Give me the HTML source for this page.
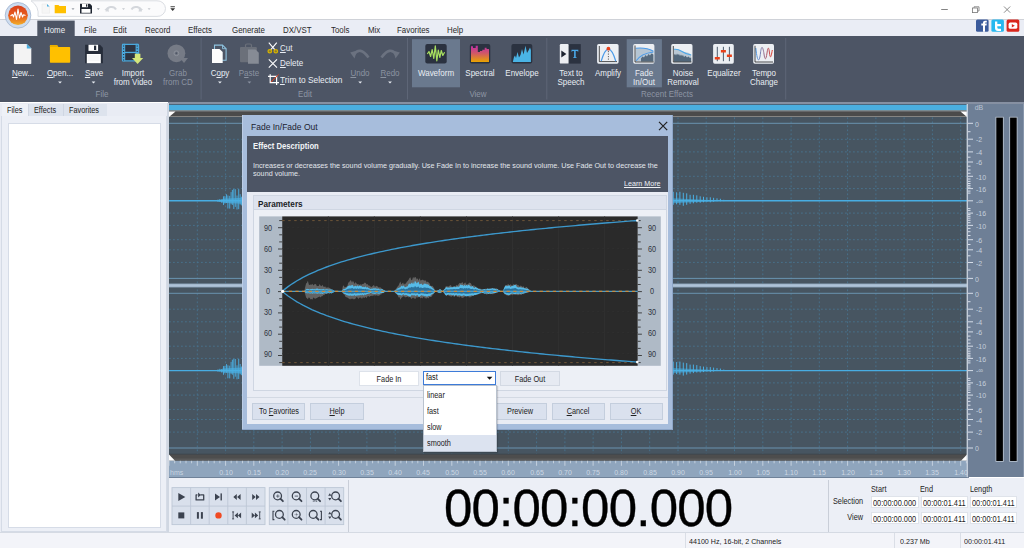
<!DOCTYPE html><html><head><meta charset="utf-8"><style>
*{margin:0;padding:0;box-sizing:border-box}
html,body{width:1024px;height:548px;overflow:hidden;background:#fff;font-family:"Liberation Sans", sans-serif;position:relative}
.a{position:absolute}
.t{position:absolute;white-space:nowrap;line-height:1}
</style></head><body>
<div class="a" style="left:0px;top:0px;width:1024px;height:19px;background:#fff"></div><div class="a" style="left:0px;top:19px;width:1024px;height:1px;background:#cfd2d8"></div><div class="a" style="left:0px;top:20px;width:1024px;height:16px;background:#eaedf5"></div><div class="a" style="left:0px;top:36px;width:1024px;height:66px;background:#4d5565"></div><div class="a" style="left:0px;top:102.5px;width:168px;height:430px;background:#e9ecf4"></div><div class="a" style="left:168px;top:104px;width:801px;height:374px;background:#7e8ea4"></div><div class="a" style="left:169px;top:104.5px;width:798px;height:356px;background:#475561"></div><div class="a" style="left:968px;top:104px;width:56px;height:373px;background:#6e7f96;border-right:1.5px solid #8796ab"></div><div class="a" style="left:168px;top:478px;width:856px;height:54px;background:#ebeef5"></div><div class="a" style="left:0px;top:532px;width:1024px;height:16px;background:#f3f4f9"></div><svg class="a" style="left:0;top:0" width="1024" height="548" viewBox="0 0 1024 548"><defs>
<linearGradient id="appg" x1="0" y1="0" x2="0" y2="1"><stop offset="0" stop-color="#d8401c"/><stop offset="0.55" stop-color="#e8601e"/><stop offset="1" stop-color="#f2b02a"/></linearGradient>
<linearGradient id="specg" x1="0" y1="0" x2="0" y2="1"><stop offset="0" stop-color="#c02fa8"/><stop offset="0.45" stop-color="#d0566a"/><stop offset="1" stop-color="#e8a400"/></linearGradient>
<linearGradient id="tempog" x1="0" y1="0" x2="1" y2="0"><stop offset="0" stop-color="#4a9ae8"/><stop offset="1" stop-color="#e03a2a"/></linearGradient>
</defs><path d="M31 0.8 H157 A8 8 0 0 1 165.5 8.6 A8 8 0 0 1 157 16.4 H38 A16 16 0 0 0 31 0.8 Z" fill="#fbfbfc" stroke="#d6d9df" stroke-width="0.9"/><path d="M42 4 H47 L49.5 6.5 V13.2 H42 Z" fill="#f6f6f6" stroke="#e4e4e4" stroke-width="0.4"/><path d="M47 4 L49.5 6.5 H47 Z" fill="#4aaee0"/><path d="M54.7 5 H58.5 L59.5 6 H66 V13.3 H54.7 Z" fill="#ffc000"/><path d="M71.5 8.2 h3 l-1.5 1.8 z" fill="#9aa0a8"/><path d="M80 3.8 H90 L92 5.8 V13.6 H80 Z" fill="#1e2530"/><rect x="82" y="3.8" width="6" height="3.4" fill="#fff"/><rect x="86" y="4.3" width="1.3" height="2.4" fill="#1e2530"/><rect x="81.5" y="9" width="9" height="3.8" fill="#fff"/><path d="M96.8 8.2 h3 l-1.5 1.8 z" fill="#9aa0a8"/><path d="M106.5 11.5 A5 4.5 0 0 1 116 9.5" fill="none" stroke="#d4d7dc" stroke-width="2"/><path d="M104.5 9.5 L108.5 7 L108.8 12 Z" fill="#d4d7dc"/><path d="M122 8.2 h3 l-1.5 1.8 z" fill="#c4c8ce"/><path d="M141 11.5 A5 4.5 0 0 0 131.5 9.5" fill="none" stroke="#d4d7dc" stroke-width="2"/><path d="M143 9.5 L139 7 L138.7 12 Z" fill="#d4d7dc"/><path d="M147.6 8.2 h3 l-1.5 1.8 z" fill="#c4c8ce"/><rect x="170.5" y="6.3" width="4.4" height="0.9" fill="#333"/><path d="M170.3 8.3 h4.8 l-2.4 2.6 z" fill="#333"/><circle cx="18" cy="15.3" r="12.8" fill="#cddcf0" stroke="#98acc8" stroke-width="0.7"/><circle cx="18" cy="15.3" r="9.8" fill="url(#appg)"/><path d="M10.5 16 L12.5 14.5 L13.5 17 L15 12 L16.5 19.5 L18 9 L19.5 18 L21 12.5 L22.5 17 L23.5 14.8 L25.5 15.5" fill="none" stroke="#fff" stroke-width="1.1" stroke-linejoin="round"/><rect x="941.2" y="9" width="6.6" height="0.9" fill="#777"/><rect x="972.5" y="8" width="5" height="4.6" fill="none" stroke="#777" stroke-width="0.8"/><path d="M974 7.8 V6.8 H979 V11 H977.8" fill="none" stroke="#777" stroke-width="0.8"/><path d="M1004 6.5 L1010.2 12.7 M1010.2 6.5 L1004 12.7" stroke="#777" stroke-width="0.85"/><rect x="976" y="19.4" width="12.6" height="12.4" rx="1.5" fill="#3b5b9c"/><path d="M983 31.8 V25.5 H981.3 V23.6 H983 V22.4 Q983 20.7 985 20.7 H986.8 V22.6 H985.6 Q985 22.6 985 23.2 V23.6 H986.8 L986.5 25.5 H985 V31.8 Z" fill="#fff"/><rect x="991.4" y="19.4" width="12.5" height="12.4" rx="1.5" fill="#27b8ef"/><path d="M995 21.5 H997.3 V24 H1001 V26.2 H997.3 V27.5 Q997.3 28.8 998.6 28.8 H1001 V31 H998 Q995 31 995 28 Z" fill="#fff"/><rect x="1006.6" y="19.4" width="12.7" height="12.4" rx="1.5" fill="#d9261c"/><rect x="1008.6" y="22.6" width="8.7" height="6.2" rx="1.6" fill="#fff"/><path d="M1011.8 23.9 L1014.8 25.7 L1011.8 27.5 Z" fill="#d9261c"/><rect x="37.3" y="20.6" width="37.4" height="16" fill="#4d5565"/><rect x="200.6" y="38" width="1" height="61.5" fill="#5e6677"/><rect x="407.0" y="38" width="1" height="61.5" fill="#5e6677"/><rect x="546.3" y="38" width="1" height="61.5" fill="#5e6677"/><rect x="785.2" y="38" width="1" height="61.5" fill="#5e6677"/><rect x="412" y="39.2" width="48" height="48.1" fill="#6a798e"/><rect x="626.7" y="39.2" width="35.2" height="48.1" fill="#6a798e"/><path d="M14.6 43.9 H26.8 L31.3 48.6 V63.2 Q31.3 64 30.5 64 H14.6 Q13.9 64 13.9 63.2 V44.7 Q13.9 43.9 14.6 43.9 Z" fill="#f3f3f3"/><path d="M26.8 43.9 L31.3 48.6 H26.8 Z" fill="#4aaee0"/><path d="M50.6 45 H57 L58.3 47 H69.4 Q70.2 47 70.2 47.8 V62 Q70.2 62.7 69.4 62.7 H50.6 Q49.9 62.7 49.9 62 V45.8 Q49.9 45 50.6 45 Z" fill="#ffc000"/><path d="M49.9 47 H58.3 L57 45 H50.6 Q49.9 45 49.9 45.8Z" fill="#e8ae00"/><path d="M85.1 44.8 H100 L102.9 47.7 V63.2 H85.1 Z" fill="#262d3a"/><rect x="88.5" y="44.8" width="9.6" height="6.1" fill="#fff"/><rect x="94" y="45.6" width="2.2" height="4.4" fill="#262d3a"/><rect x="86.8" y="54" width="14" height="9.2" fill="#fff"/><path d="M88 56 H99.5 M88 58 H99.5 M88 60 H99.5" stroke="#dde0e6" stroke-width="0.5"/><rect x="122.5" y="44.3" width="16" height="16.6" rx="1" fill="#2d3442" stroke="#4aa8dc" stroke-width="1.3"/><rect x="122" y="43.8" width="3.2" height="17.4" fill="#4aa8dc"/><rect x="135.6" y="43.8" width="3.2" height="17.4" fill="#4aa8dc"/><rect x="122" y="51.8" width="16.8" height="1.3" fill="#4aa8dc"/><rect x="123" y="45.5" width="1.2" height="1" fill="#2d3442"/><rect x="136.6" y="45.5" width="1.2" height="1" fill="#2d3442"/><rect x="123" y="48.3" width="1.2" height="1" fill="#2d3442"/><rect x="136.6" y="48.3" width="1.2" height="1" fill="#2d3442"/><rect x="123" y="51" width="1.2" height="1" fill="#2d3442"/><rect x="136.6" y="51" width="1.2" height="1" fill="#2d3442"/><rect x="123" y="54" width="1.2" height="1" fill="#2d3442"/><rect x="136.6" y="54" width="1.2" height="1" fill="#2d3442"/><rect x="123" y="56.8" width="1.2" height="1" fill="#2d3442"/><rect x="136.6" y="56.8" width="1.2" height="1" fill="#2d3442"/><rect x="123" y="59.5" width="1.2" height="1" fill="#2d3442"/><rect x="136.6" y="59.5" width="1.2" height="1" fill="#2d3442"/><path d="M134.8 53.7 H140.4 V58 H143.2 L137.6 63.9 L132 58 H134.8 Z" fill="#d4e67a"/><circle cx="176.4" cy="53.3" r="8.9" fill="#767b86"/><circle cx="176.4" cy="53.3" r="2.4" fill="none" stroke="#8b909a" stroke-width="1"/><circle cx="176.4" cy="53.3" r="1" fill="#4d5565"/><path d="M180 58 H188 L184 63 Z" fill="#767b86"/><path d="M214.5 45.1 H222.5 L226.1 48.7 V60.3 H214.5 Z" fill="none" stroke="#8fc4e0" stroke-width="1.1"/><path d="M222.5 45.1 V48.7 H226.1" fill="none" stroke="#8fc4e0" stroke-width="0.9"/><path d="M212 48.9 H219.5 L222.7 52 V63.1 H212 Z" fill="#fdfdfd"/><rect x="240" y="47" width="16.9" height="15.3" rx="1" fill="#6b707a"/><rect x="245.5" y="44" width="6" height="4" rx="1.5" fill="none" stroke="#6b707a" stroke-width="1.2"/><path d="M248 49.6 H255.5 L258.8 52.8 V63.8 H248 Z" fill="#868b95"/><path d="M268.8 42.6 L275.2 50.2 M276.8 42.6 L270.4 50.2" stroke="#fff" stroke-width="1.1"/><ellipse cx="269.8" cy="51.2" rx="1.8" ry="1.6" fill="#8a7a30" stroke="#d6b300" stroke-width="1.2"/><ellipse cx="275.8" cy="51.2" rx="1.8" ry="1.6" fill="#8a7a30" stroke="#d6b300" stroke-width="1.2"/><path d="M268.8 59.3 L277 67.6 M277 59.3 L268.8 67.6" stroke="#fff" stroke-width="1.1"/><path d="M270.2 74.2 V82.6 H279 M268 76.4 H276.6 V85" fill="none" stroke="#fff" stroke-width="1.2"/><path d="M271 82 L278.6 74.6" stroke="#e8401a" stroke-width="1"/><path d="M353.5 55 Q360 45.5 368.5 57.5" fill="none" stroke="#6b7280" stroke-width="2.6"/><path d="M350.2 52.5 L357 50.5 L354.5 58.5 Z" fill="#6b7280"/><path d="M396.5 55 Q390 45.5 381.5 57.5" fill="none" stroke="#6b7280" stroke-width="2.6"/><path d="M399.8 52.5 L393 50.5 L395.5 58.5 Z" fill="#6b7280"/><rect x="425.3" y="44.1" width="21.4" height="19.4" rx="2" fill="#2b3240"/><path d="M427.3 54 L429 51.5 L430.6 56.5 L432.2 49.5 L433.8 58.5 L435.3 45.8 L436.8 60.8 L438.3 50 L439.8 57.5 L441.3 50.5 L442.8 55.5 L444.6 52.3" fill="none" stroke="#a8e060" stroke-width="1.2" stroke-linejoin="round"/><rect x="469.8" y="44.1" width="20.5" height="19.4" rx="2" fill="#2b3240"/><path d="M471 62 V46.3 H473 V48 H475.7 V45.8 H477.8 V52 H480 V51 H482.3 V49.8 H484.7 V47.8 H486.6 V49 H489 V62 Z" fill="url(#specg)"/><rect x="511.4" y="44.1" width="20.9" height="19.4" rx="2" fill="#2b3240"/><path d="M512.8 62 L514 57 L515 55.5 L516 58 L517.5 52 L519 57.5 L520.5 55 L522 49 L523.5 54.5 L525.5 45.8 L527 53 L528.5 50.5 L530 47.5 L530.9 50 V62 Z" fill="#4ab4e6"/><rect x="559.8" y="44.1" width="9" height="19.5" rx="1.2" fill="#eceef2"/><rect x="568.7" y="44.1" width="12.1" height="19.5" fill="#2b3240"/><path d="M561.3 50.6 L566.4 54 L561.3 57.4 Z" fill="#1c2230"/><path d="M571.5 49.8 H578.3 V51.8 H577.6 V51 H575.7 V57.3 H576.6 V58 H573.2 V57.3 H574.1 V51 H572.2 V51.8 H571.5 Z" fill="#4aa8e8"/><rect x="597.1" y="44.1" width="21.5" height="19.6" rx="1.6" fill="#eceff3"/><rect x="633.2" y="44.1" width="21.2" height="19.6" rx="1.6" fill="#eceff3"/><rect x="671.2" y="44.1" width="21.3" height="19.6" rx="1.6" fill="#eceff3"/><rect x="713.1" y="44.1" width="20.7" height="19.6" rx="1.6" fill="#eceff3"/><rect x="753.2" y="44.1" width="20.8" height="19.6" rx="1.6" fill="#eceff3"/><path d="M599.3 46 V61.6 H617" fill="none" stroke="#222" stroke-width="0.8"/><path d="M601.2 61.2 Q608.4 37 615.8 61.2" fill="none" stroke="#4a9ae8" stroke-width="1.2"/><path d="M608.4 51 V61" stroke="#222" stroke-width="0.7" stroke-dasharray="1.2 1.3"/><circle cx="608.4" cy="48.7" r="1.9" fill="#e8401a"/><path d="M635.6 48.3 Q646 47.2 653.4 51.3 V61.5 H635.6 Z" fill="#b5c5d3"/><path d="M641 61.5 V58.5 L642.5 56.5 L644 57.5 L645.5 55 L647 56.5 L648.5 54 L650 55.5 L651.5 53.5 L653.4 54.5 V61.5 Z" fill="#566a7d"/><path d="M635.8 48.3 Q646 47.2 653.4 51.3" fill="none" stroke="#4a9ae8" stroke-width="1.1"/><path d="M636.2 60.8 Q641 53.5 653.4 52" fill="none" stroke="#4a9ae8" stroke-width="1.1"/><path d="M635 45.5 V62 H653.8" fill="none" stroke="#222" stroke-width="0.8"/><path d="M674 49.3 L678 49.5 L682 51.5 L686 52.2 L689 53 L691.2 55 V61.8 H674 Z" fill="#b9c7d3"/><path d="M674 61.8 V55 L675 53.8 L676 55.5 L677 53.5 L678 55 L679 54 L680 56 L681 54.5 L682 56 L683 55 L684 57 L685.5 55.8 L687 57.5 L688.5 56.5 L690 58 L691.2 57.5 V61.8 Z" fill="#51667a"/><path d="M674 49.3 Q678 48.8 682 51.5 T691.2 55" fill="none" stroke="#4aa6e8" stroke-width="1.1"/><path d="M673.3 46 V62 H691.5" fill="none" stroke="#222" stroke-width="0.8"/><path d="M717.3 46.8 V61.2 M723.4 46.8 V61.2 M729.4 46.8 V61.2" stroke="#3a4a5c" stroke-width="0.9"/><rect x="714.8" y="57" width="5" height="2.5" fill="#e8401a"/><rect x="720.9" y="50" width="5" height="2.5" fill="#e8401a"/><rect x="726.9" y="54.5" width="5" height="2.5" fill="#e8401a"/><path d="M755.8 48 C757.5 64 759.5 62 760.5 53 S763 47 764 54 S766 60 767 53 S768.8 47 769.5 53 S771 58 772.3 50" fill="none" stroke="url(#tempog)" stroke-width="1"/><path d="M755 45.8 V62 H773" fill="none" stroke="#222" stroke-width="0.8"/><path d="M58.1 81.4 h3.8 l-1.9 2.1 z" fill="#e8ecf2"/><path d="M91.6 81.4 h3.8 l-1.9 2.1 z" fill="#e8ecf2"/><path d="M218.0 81.4 h3.8 l-1.9 2.1 z" fill="#e8ecf2"/><path d="M247.5 81.4 h3.8 l-1.9 2.1 z" fill="#8b93a1"/><path d="M358.3 81.4 h3.8 l-1.9 2.1 z" fill="#e8ecf2"/><path d="M388.1 81.4 h3.8 l-1.9 2.1 z" fill="#e8ecf2"/></svg><div class="t" style="left:44.3px;top:25.74px;font-size:8.85px;color:#eef1f6;transform:scaleX(0.8929);transform-origin:left center;">Home</div><div class="t" style="left:83.5px;top:25.74px;font-size:8.85px;color:#2a2a2a;transform:scaleX(0.8929);transform-origin:left center;">File</div><div class="t" style="left:113.2px;top:25.74px;font-size:8.85px;color:#2a2a2a;transform:scaleX(0.8929);transform-origin:left center;">Edit</div><div class="t" style="left:145.4px;top:25.74px;font-size:8.85px;color:#2a2a2a;transform:scaleX(0.8929);transform-origin:left center;">Record</div><div class="t" style="left:188.3px;top:25.74px;font-size:8.85px;color:#2a2a2a;transform:scaleX(0.8929);transform-origin:left center;">Effects</div><div class="t" style="left:231.7px;top:25.74px;font-size:8.85px;color:#2a2a2a;transform:scaleX(0.8929);transform-origin:left center;">Generate</div><div class="t" style="left:283.2px;top:25.74px;font-size:8.85px;color:#2a2a2a;transform:scaleX(0.8929);transform-origin:left center;">DX/VST</div><div class="t" style="left:330.7px;top:25.74px;font-size:8.85px;color:#2a2a2a;transform:scaleX(0.8929);transform-origin:left center;">Tools</div><div class="t" style="left:367.5px;top:25.74px;font-size:8.85px;color:#2a2a2a;transform:scaleX(0.8929);transform-origin:left center;">Mix</div><div class="t" style="left:396.8px;top:25.74px;font-size:8.85px;color:#2a2a2a;transform:scaleX(0.8929);transform-origin:left center;">Favorites</div><div class="t" style="left:447.2px;top:25.74px;font-size:8.85px;color:#2a2a2a;transform:scaleX(0.8929);transform-origin:left center;">Help</div><div class="t" style="left:-57.30px;width:160px;text-align:center;top:69.08px;font-size:8.96px;color:#e9edf3;transform:scaleX(0.8929);transform-origin:center center;"><u>N</u>ew...</div><div class="t" style="left:-20.00px;width:160px;text-align:center;top:69.08px;font-size:8.96px;color:#e9edf3;transform:scaleX(0.8929);transform-origin:center center;"><u>O</u>pen...</div><div class="t" style="left:13.50px;width:160px;text-align:center;top:69.08px;font-size:8.96px;color:#e9edf3;transform:scaleX(0.8929);transform-origin:center center;"><u>S</u>ave</div><div class="t" style="left:52.80px;width:160px;text-align:center;top:68.98px;font-size:8.96px;color:#e9edf3;transform:scaleX(0.8929);transform-origin:center center;">Import</div><div class="t" style="left:52.80px;width:160px;text-align:center;top:78.08px;font-size:8.96px;color:#e9edf3;transform:scaleX(0.8929);transform-origin:center center;">from Video</div><div class="t" style="left:97.50px;width:160px;text-align:center;top:68.98px;font-size:8.96px;color:#8b93a1;transform:scaleX(0.8929);transform-origin:center center;">Grab</div><div class="t" style="left:97.50px;width:160px;text-align:center;top:78.08px;font-size:8.96px;color:#8b93a1;transform:scaleX(0.8929);transform-origin:center center;">from CD</div><div class="t" style="left:21.50px;width:160px;text-align:center;top:89.58px;font-size:8.96px;color:#8e96a4;transform:scaleX(0.8929);transform-origin:center center;">File</div><div class="t" style="left:139.90px;width:160px;text-align:center;top:68.88px;font-size:8.96px;color:#e9edf3;transform:scaleX(0.8929);transform-origin:center center;">C<u>o</u>py</div><div class="t" style="left:169.40px;width:160px;text-align:center;top:68.88px;font-size:8.96px;color:#8b93a1;transform:scaleX(0.8929);transform-origin:center center;">P<u>a</u>ste</div><div class="t" style="left:280.1px;top:43.68px;font-size:8.96px;color:#e9edf3;transform:scaleX(0.8929);transform-origin:left center;"><u>C</u>ut</div><div class="t" style="left:280.1px;top:59.48px;font-size:8.96px;color:#e9edf3;transform:scaleX(0.8929);transform-origin:left center;"><u>D</u>elete</div><div class="t" style="left:280.1px;top:75.59px;font-size:9.35px;color:#e9edf3;transform:scaleX(0.8929);transform-origin:left center;"><u>T</u>rim to Selection</div><div class="t" style="left:280.20px;width:160px;text-align:center;top:68.88px;font-size:8.96px;color:#8b93a1;transform:scaleX(0.8929);transform-origin:center center;"><u>U</u>ndo</div><div class="t" style="left:310.00px;width:160px;text-align:center;top:68.88px;font-size:8.96px;color:#8b93a1;transform:scaleX(0.8929);transform-origin:center center;"><u>R</u>edo</div><div class="t" style="left:225.00px;width:160px;text-align:center;top:89.58px;font-size:8.96px;color:#8e96a4;transform:scaleX(0.8929);transform-origin:center center;">Edit</div><div class="t" style="left:356.00px;width:160px;text-align:center;top:68.88px;font-size:8.96px;color:#e9edf3;transform:scaleX(0.8929);transform-origin:center center;">Waveform</div><div class="t" style="left:400.20px;width:160px;text-align:center;top:68.88px;font-size:8.96px;color:#e9edf3;transform:scaleX(0.8929);transform-origin:center center;">Spectral</div><div class="t" style="left:442.00px;width:160px;text-align:center;top:68.88px;font-size:8.96px;color:#e9edf3;transform:scaleX(0.8929);transform-origin:center center;">Envelope</div><div class="t" style="left:397.80px;width:160px;text-align:center;top:89.58px;font-size:8.96px;color:#8e96a4;transform:scaleX(0.8929);transform-origin:center center;">View</div><div class="t" style="left:490.60px;width:160px;text-align:center;top:69.08px;font-size:8.96px;color:#e9edf3;transform:scaleX(0.8929);transform-origin:center center;">Text to</div><div class="t" style="left:490.60px;width:160px;text-align:center;top:78.28px;font-size:8.96px;color:#e9edf3;transform:scaleX(0.8929);transform-origin:center center;">Speech</div><div class="t" style="left:528.30px;width:160px;text-align:center;top:68.88px;font-size:8.96px;color:#e9edf3;transform:scaleX(0.8929);transform-origin:center center;">Amplify</div><div class="t" style="left:564.20px;width:160px;text-align:center;top:69.08px;font-size:8.96px;color:#e9edf3;transform:scaleX(0.8929);transform-origin:center center;">Fade</div><div class="t" style="left:564.20px;width:160px;text-align:center;top:78.28px;font-size:8.96px;color:#e9edf3;transform:scaleX(0.8929);transform-origin:center center;">In/Out</div><div class="t" style="left:602.50px;width:160px;text-align:center;top:69.08px;font-size:8.96px;color:#e9edf3;transform:scaleX(0.8929);transform-origin:center center;">Noise</div><div class="t" style="left:602.50px;width:160px;text-align:center;top:78.28px;font-size:8.96px;color:#e9edf3;transform:scaleX(0.8929);transform-origin:center center;">Removal</div><div class="t" style="left:643.60px;width:160px;text-align:center;top:68.88px;font-size:8.96px;color:#e9edf3;transform:scaleX(0.8929);transform-origin:center center;">Equalizer</div><div class="t" style="left:684.00px;width:160px;text-align:center;top:69.08px;font-size:8.96px;color:#e9edf3;transform:scaleX(0.8929);transform-origin:center center;">Tempo</div><div class="t" style="left:684.00px;width:160px;text-align:center;top:78.28px;font-size:8.96px;color:#e9edf3;transform:scaleX(0.8929);transform-origin:center center;">Change</div><div class="t" style="left:587.00px;width:160px;text-align:center;top:89.58px;font-size:8.96px;color:#8e96a4;transform:scaleX(0.8929);transform-origin:center center;">Recent Effects</div><svg class="a" style="left:0;top:0" width="1024" height="548" viewBox="0 0 1024 548"><rect x="168" y="102" width="856" height="2" fill="#8690a2"/><rect x="169" y="104" width="798" height="0.8" fill="#3e4957"/><rect x="169" y="104.8" width="798" height="5.6" fill="#4aaee0"/><rect x="169" y="110.4" width="798" height="1.2" fill="#9a9690"/><rect x="169" y="111.6" width="798" height="4.4" fill="#4b4b4b"/><rect x="169" y="116" width="798" height="1" fill="#858583"/><polygon points="169,111.6 175.5,111.6 169,117" fill="#fff"/><polygon points="967,111.6 960.5,111.6 967,117" fill="#fff"/><line x1="197.3" y1="117.4" x2="197.3" y2="453.8" stroke="#48728c" stroke-width="0.95" stroke-dasharray="1.8 2.2"/><line x1="225.6" y1="117.4" x2="225.6" y2="453.8" stroke="#48728c" stroke-width="0.95" stroke-dasharray="1.8 2.2"/><line x1="253.8" y1="117.4" x2="253.8" y2="453.8" stroke="#48728c" stroke-width="0.95" stroke-dasharray="1.8 2.2"/><line x1="282.1" y1="117.4" x2="282.1" y2="453.8" stroke="#48728c" stroke-width="0.95" stroke-dasharray="1.8 2.2"/><line x1="310.4" y1="117.4" x2="310.4" y2="453.8" stroke="#48728c" stroke-width="0.95" stroke-dasharray="1.8 2.2"/><line x1="338.7" y1="117.4" x2="338.7" y2="453.8" stroke="#48728c" stroke-width="0.95" stroke-dasharray="1.8 2.2"/><line x1="366.9" y1="117.4" x2="366.9" y2="453.8" stroke="#48728c" stroke-width="0.95" stroke-dasharray="1.8 2.2"/><line x1="395.2" y1="117.4" x2="395.2" y2="453.8" stroke="#48728c" stroke-width="0.95" stroke-dasharray="1.8 2.2"/><line x1="423.5" y1="117.4" x2="423.5" y2="453.8" stroke="#48728c" stroke-width="0.95" stroke-dasharray="1.8 2.2"/><line x1="451.8" y1="117.4" x2="451.8" y2="453.8" stroke="#48728c" stroke-width="0.95" stroke-dasharray="1.8 2.2"/><line x1="480.0" y1="117.4" x2="480.0" y2="453.8" stroke="#48728c" stroke-width="0.95" stroke-dasharray="1.8 2.2"/><line x1="508.3" y1="117.4" x2="508.3" y2="453.8" stroke="#48728c" stroke-width="0.95" stroke-dasharray="1.8 2.2"/><line x1="536.6" y1="117.4" x2="536.6" y2="453.8" stroke="#48728c" stroke-width="0.95" stroke-dasharray="1.8 2.2"/><line x1="564.9" y1="117.4" x2="564.9" y2="453.8" stroke="#48728c" stroke-width="0.95" stroke-dasharray="1.8 2.2"/><line x1="593.1" y1="117.4" x2="593.1" y2="453.8" stroke="#48728c" stroke-width="0.95" stroke-dasharray="1.8 2.2"/><line x1="621.4" y1="117.4" x2="621.4" y2="453.8" stroke="#48728c" stroke-width="0.95" stroke-dasharray="1.8 2.2"/><line x1="649.7" y1="117.4" x2="649.7" y2="453.8" stroke="#48728c" stroke-width="0.95" stroke-dasharray="1.8 2.2"/><line x1="678.0" y1="117.4" x2="678.0" y2="453.8" stroke="#48728c" stroke-width="0.95" stroke-dasharray="1.8 2.2"/><line x1="706.2" y1="117.4" x2="706.2" y2="453.8" stroke="#48728c" stroke-width="0.95" stroke-dasharray="1.8 2.2"/><line x1="734.5" y1="117.4" x2="734.5" y2="453.8" stroke="#48728c" stroke-width="0.95" stroke-dasharray="1.8 2.2"/><line x1="762.8" y1="117.4" x2="762.8" y2="453.8" stroke="#48728c" stroke-width="0.95" stroke-dasharray="1.8 2.2"/><line x1="791.1" y1="117.4" x2="791.1" y2="453.8" stroke="#48728c" stroke-width="0.95" stroke-dasharray="1.8 2.2"/><line x1="819.3" y1="117.4" x2="819.3" y2="453.8" stroke="#48728c" stroke-width="0.95" stroke-dasharray="1.8 2.2"/><line x1="847.6" y1="117.4" x2="847.6" y2="453.8" stroke="#48728c" stroke-width="0.95" stroke-dasharray="1.8 2.2"/><line x1="875.9" y1="117.4" x2="875.9" y2="453.8" stroke="#48728c" stroke-width="0.95" stroke-dasharray="1.8 2.2"/><line x1="904.1" y1="117.4" x2="904.1" y2="453.8" stroke="#48728c" stroke-width="0.95" stroke-dasharray="1.8 2.2"/><line x1="932.4" y1="117.4" x2="932.4" y2="453.8" stroke="#48728c" stroke-width="0.95" stroke-dasharray="1.8 2.2"/><line x1="960.7" y1="117.4" x2="960.7" y2="453.8" stroke="#48728c" stroke-width="0.95" stroke-dasharray="1.8 2.2"/><line x1="169" y1="123.3" x2="967" y2="123.3" stroke="#6a93b0" stroke-width="1"/><line x1="169" y1="278.4" x2="967" y2="278.4" stroke="#6a93b0" stroke-width="1"/><line x1="169" y1="139.3" x2="967" y2="139.3" stroke="#48728c" stroke-width="0.95" stroke-dasharray="1.8 2.2"/><line x1="169" y1="262.4" x2="967" y2="262.4" stroke="#48728c" stroke-width="0.95" stroke-dasharray="1.8 2.2"/><line x1="169" y1="151.9" x2="967" y2="151.9" stroke="#48728c" stroke-width="0.95" stroke-dasharray="1.8 2.2"/><line x1="169" y1="249.8" x2="967" y2="249.8" stroke="#48728c" stroke-width="0.95" stroke-dasharray="1.8 2.2"/><line x1="169" y1="162.0" x2="967" y2="162.0" stroke="#48728c" stroke-width="0.95" stroke-dasharray="1.8 2.2"/><line x1="169" y1="239.7" x2="967" y2="239.7" stroke="#48728c" stroke-width="0.95" stroke-dasharray="1.8 2.2"/><line x1="169" y1="176.3" x2="967" y2="176.3" stroke="#48728c" stroke-width="0.95" stroke-dasharray="1.8 2.2"/><line x1="169" y1="225.4" x2="967" y2="225.4" stroke="#48728c" stroke-width="0.95" stroke-dasharray="1.8 2.2"/><line x1="169" y1="188.6" x2="967" y2="188.6" stroke="#48728c" stroke-width="0.95" stroke-dasharray="1.8 2.2"/><line x1="169" y1="213.1" x2="967" y2="213.1" stroke="#48728c" stroke-width="0.95" stroke-dasharray="1.8 2.2"/><line x1="169" y1="293.3" x2="967" y2="293.3" stroke="#6a93b0" stroke-width="1"/><line x1="169" y1="448.0" x2="967" y2="448.0" stroke="#6a93b0" stroke-width="1"/><line x1="169" y1="309.2" x2="967" y2="309.2" stroke="#48728c" stroke-width="0.95" stroke-dasharray="1.8 2.2"/><line x1="169" y1="432.1" x2="967" y2="432.1" stroke="#48728c" stroke-width="0.95" stroke-dasharray="1.8 2.2"/><line x1="169" y1="321.8" x2="967" y2="321.8" stroke="#48728c" stroke-width="0.95" stroke-dasharray="1.8 2.2"/><line x1="169" y1="419.5" x2="967" y2="419.5" stroke="#48728c" stroke-width="0.95" stroke-dasharray="1.8 2.2"/><line x1="169" y1="331.9" x2="967" y2="331.9" stroke="#48728c" stroke-width="0.95" stroke-dasharray="1.8 2.2"/><line x1="169" y1="409.4" x2="967" y2="409.4" stroke="#48728c" stroke-width="0.95" stroke-dasharray="1.8 2.2"/><line x1="169" y1="346.2" x2="967" y2="346.2" stroke="#48728c" stroke-width="0.95" stroke-dasharray="1.8 2.2"/><line x1="169" y1="395.1" x2="967" y2="395.1" stroke="#48728c" stroke-width="0.95" stroke-dasharray="1.8 2.2"/><line x1="169" y1="358.4" x2="967" y2="358.4" stroke="#48728c" stroke-width="0.95" stroke-dasharray="1.8 2.2"/><line x1="169" y1="382.9" x2="967" y2="382.9" stroke="#48728c" stroke-width="0.95" stroke-dasharray="1.8 2.2"/><rect x="169" y="283.4" width="798" height="4.2" fill="#7d93a8"/><rect x="169" y="284.2" width="798" height="2.6" fill="#aec3d8"/><line x1="169" y1="200.8" x2="967" y2="200.8" stroke="#48ade2" stroke-width="1.4"/><path d="M218.0 199.5V202.0M219.8 199.0V202.0M221.6 199.6V202.7M223.5 196.3V205.0M224.9 196.1V203.5M226.5 194.3V203.0M227.9 195.5V208.5M229.7 195.9V208.6M231.1 192.1V204.3M232.4 189.9V204.9M233.8 189.0V209.0M235.3 189.2V206.9M237.0 195.5V209.5M238.7 189.1V209.2M240.2 194.2V204.6M241.6 196.7V205.4" stroke="#4aafe3" stroke-width="0.9" fill="none"/><polygon points="218,200.8 223,198.8 242,197.8 242,203.8 223,202.8" fill="#4aafe3" opacity="0.7"/><path d="M673.2 191.8V204.8M676.6 192.3V204.3M679.9 191.8V204.8M683.3 192.8V205.8M686.7 193.3V204.8M690.1 194.8V203.8M693.4 194.8V203.3M696.8 195.3V202.8M700.2 196.3V202.8M703.5 196.8V202.3M706.9 197.3V201.8M710.3 197.3V202.3M713.6 197.8V201.8M717.0 198.3V201.3M720.4 198.8V201.3M723.8 199.8V201.2" stroke="#4aafe3" stroke-width="1.0" fill="none"/><polygon points="672,198.3 725,200.8 672,203.3" fill="#4aafe3" opacity="0.6"/><line x1="169" y1="370.6" x2="967" y2="370.6" stroke="#48ade2" stroke-width="1.4"/><path d="M218.0 369.3V371.8M219.8 368.8V371.8M221.6 369.4V372.5M223.5 366.1V374.8M224.9 365.9V373.3M226.5 364.1V372.8M227.9 365.3V378.3M229.7 365.7V378.4M231.1 361.9V374.1M232.4 359.7V374.7M233.8 358.8V378.8M235.3 359.0V376.7M237.0 365.3V379.3M238.7 358.9V379.0M240.2 364.0V374.4M241.6 366.5V375.2" stroke="#4aafe3" stroke-width="0.9" fill="none"/><polygon points="218,370.6 223,368.6 242,367.6 242,373.6 223,372.6" fill="#4aafe3" opacity="0.7"/><path d="M673.2 361.6V374.6M676.6 362.1V374.1M679.9 361.6V374.6M683.3 362.6V375.6M686.7 363.1V374.6M690.1 364.6V373.6M693.4 364.6V373.1M696.8 365.1V372.6M700.2 366.1V372.6M703.5 366.6V372.1M706.9 367.1V371.6M710.3 367.1V372.1M713.6 367.6V371.6M717.0 368.1V371.1M720.4 368.6V371.1M723.8 369.6V370.9" stroke="#4aafe3" stroke-width="1.0" fill="none"/><polygon points="672,368.1 725,370.6 672,373.1" fill="#4aafe3" opacity="0.6"/><rect x="169" y="453.8" width="798" height="0.8" fill="#3a3f44"/><rect x="169" y="454.6" width="798" height="6.2" fill="#4d4d4d"/><rect x="169" y="458.5" width="798" height="2.3" fill="#5a5a5a"/><polygon points="169,454.6 169,460.8 175,460.8" fill="#fff"/><polygon points="967,454.6 967,460.8 961,460.8" fill="#fff"/><rect x="169" y="460.8" width="798" height="16.2" fill="#8fa5bd"/><rect x="168" y="477" width="799" height="1.2" fill="#6f8299"/><line x1="169.0" y1="460.8" x2="169.0" y2="465.8" stroke="#c9d5e1" stroke-width="0.9"/><line x1="174.7" y1="460.8" x2="174.7" y2="463.3" stroke="#c9d5e1" stroke-width="0.9"/><line x1="180.3" y1="460.8" x2="180.3" y2="463.3" stroke="#c9d5e1" stroke-width="0.9"/><line x1="186.0" y1="460.8" x2="186.0" y2="463.3" stroke="#c9d5e1" stroke-width="0.9"/><line x1="191.6" y1="460.8" x2="191.6" y2="463.3" stroke="#c9d5e1" stroke-width="0.9"/><line x1="197.3" y1="460.8" x2="197.3" y2="465.8" stroke="#c9d5e1" stroke-width="0.9"/><line x1="202.9" y1="460.8" x2="202.9" y2="463.3" stroke="#c9d5e1" stroke-width="0.9"/><line x1="208.6" y1="460.8" x2="208.6" y2="463.3" stroke="#c9d5e1" stroke-width="0.9"/><line x1="214.2" y1="460.8" x2="214.2" y2="463.3" stroke="#c9d5e1" stroke-width="0.9"/><line x1="219.9" y1="460.8" x2="219.9" y2="463.3" stroke="#c9d5e1" stroke-width="0.9"/><line x1="225.6" y1="460.8" x2="225.6" y2="465.8" stroke="#c9d5e1" stroke-width="0.9"/><line x1="231.2" y1="460.8" x2="231.2" y2="463.3" stroke="#c9d5e1" stroke-width="0.9"/><line x1="236.9" y1="460.8" x2="236.9" y2="463.3" stroke="#c9d5e1" stroke-width="0.9"/><line x1="242.5" y1="460.8" x2="242.5" y2="463.3" stroke="#c9d5e1" stroke-width="0.9"/><line x1="248.2" y1="460.8" x2="248.2" y2="463.3" stroke="#c9d5e1" stroke-width="0.9"/><line x1="253.8" y1="460.8" x2="253.8" y2="465.8" stroke="#c9d5e1" stroke-width="0.9"/><line x1="259.5" y1="460.8" x2="259.5" y2="463.3" stroke="#c9d5e1" stroke-width="0.9"/><line x1="265.1" y1="460.8" x2="265.1" y2="463.3" stroke="#c9d5e1" stroke-width="0.9"/><line x1="270.8" y1="460.8" x2="270.8" y2="463.3" stroke="#c9d5e1" stroke-width="0.9"/><line x1="276.4" y1="460.8" x2="276.4" y2="463.3" stroke="#c9d5e1" stroke-width="0.9"/><line x1="282.1" y1="460.8" x2="282.1" y2="465.8" stroke="#c9d5e1" stroke-width="0.9"/><line x1="287.8" y1="460.8" x2="287.8" y2="463.3" stroke="#c9d5e1" stroke-width="0.9"/><line x1="293.4" y1="460.8" x2="293.4" y2="463.3" stroke="#c9d5e1" stroke-width="0.9"/><line x1="299.1" y1="460.8" x2="299.1" y2="463.3" stroke="#c9d5e1" stroke-width="0.9"/><line x1="304.7" y1="460.8" x2="304.7" y2="463.3" stroke="#c9d5e1" stroke-width="0.9"/><line x1="310.4" y1="460.8" x2="310.4" y2="465.8" stroke="#c9d5e1" stroke-width="0.9"/><line x1="316.0" y1="460.8" x2="316.0" y2="463.3" stroke="#c9d5e1" stroke-width="0.9"/><line x1="321.7" y1="460.8" x2="321.7" y2="463.3" stroke="#c9d5e1" stroke-width="0.9"/><line x1="327.3" y1="460.8" x2="327.3" y2="463.3" stroke="#c9d5e1" stroke-width="0.9"/><line x1="333.0" y1="460.8" x2="333.0" y2="463.3" stroke="#c9d5e1" stroke-width="0.9"/><line x1="338.6" y1="460.8" x2="338.6" y2="465.8" stroke="#c9d5e1" stroke-width="0.9"/><line x1="344.3" y1="460.8" x2="344.3" y2="463.3" stroke="#c9d5e1" stroke-width="0.9"/><line x1="350.0" y1="460.8" x2="350.0" y2="463.3" stroke="#c9d5e1" stroke-width="0.9"/><line x1="355.6" y1="460.8" x2="355.6" y2="463.3" stroke="#c9d5e1" stroke-width="0.9"/><line x1="361.3" y1="460.8" x2="361.3" y2="463.3" stroke="#c9d5e1" stroke-width="0.9"/><line x1="366.9" y1="460.8" x2="366.9" y2="465.8" stroke="#c9d5e1" stroke-width="0.9"/><line x1="372.6" y1="460.8" x2="372.6" y2="463.3" stroke="#c9d5e1" stroke-width="0.9"/><line x1="378.2" y1="460.8" x2="378.2" y2="463.3" stroke="#c9d5e1" stroke-width="0.9"/><line x1="383.9" y1="460.8" x2="383.9" y2="463.3" stroke="#c9d5e1" stroke-width="0.9"/><line x1="389.5" y1="460.8" x2="389.5" y2="463.3" stroke="#c9d5e1" stroke-width="0.9"/><line x1="395.2" y1="460.8" x2="395.2" y2="465.8" stroke="#c9d5e1" stroke-width="0.9"/><line x1="400.9" y1="460.8" x2="400.9" y2="463.3" stroke="#c9d5e1" stroke-width="0.9"/><line x1="406.5" y1="460.8" x2="406.5" y2="463.3" stroke="#c9d5e1" stroke-width="0.9"/><line x1="412.2" y1="460.8" x2="412.2" y2="463.3" stroke="#c9d5e1" stroke-width="0.9"/><line x1="417.8" y1="460.8" x2="417.8" y2="463.3" stroke="#c9d5e1" stroke-width="0.9"/><line x1="423.5" y1="460.8" x2="423.5" y2="465.8" stroke="#c9d5e1" stroke-width="0.9"/><line x1="429.1" y1="460.8" x2="429.1" y2="463.3" stroke="#c9d5e1" stroke-width="0.9"/><line x1="434.8" y1="460.8" x2="434.8" y2="463.3" stroke="#c9d5e1" stroke-width="0.9"/><line x1="440.4" y1="460.8" x2="440.4" y2="463.3" stroke="#c9d5e1" stroke-width="0.9"/><line x1="446.1" y1="460.8" x2="446.1" y2="463.3" stroke="#c9d5e1" stroke-width="0.9"/><line x1="451.8" y1="460.8" x2="451.8" y2="465.8" stroke="#c9d5e1" stroke-width="0.9"/><line x1="457.4" y1="460.8" x2="457.4" y2="463.3" stroke="#c9d5e1" stroke-width="0.9"/><line x1="463.1" y1="460.8" x2="463.1" y2="463.3" stroke="#c9d5e1" stroke-width="0.9"/><line x1="468.7" y1="460.8" x2="468.7" y2="463.3" stroke="#c9d5e1" stroke-width="0.9"/><line x1="474.4" y1="460.8" x2="474.4" y2="463.3" stroke="#c9d5e1" stroke-width="0.9"/><line x1="480.0" y1="460.8" x2="480.0" y2="465.8" stroke="#c9d5e1" stroke-width="0.9"/><line x1="485.7" y1="460.8" x2="485.7" y2="463.3" stroke="#c9d5e1" stroke-width="0.9"/><line x1="491.3" y1="460.8" x2="491.3" y2="463.3" stroke="#c9d5e1" stroke-width="0.9"/><line x1="497.0" y1="460.8" x2="497.0" y2="463.3" stroke="#c9d5e1" stroke-width="0.9"/><line x1="502.6" y1="460.8" x2="502.6" y2="463.3" stroke="#c9d5e1" stroke-width="0.9"/><line x1="508.3" y1="460.8" x2="508.3" y2="465.8" stroke="#c9d5e1" stroke-width="0.9"/><line x1="514.0" y1="460.8" x2="514.0" y2="463.3" stroke="#c9d5e1" stroke-width="0.9"/><line x1="519.6" y1="460.8" x2="519.6" y2="463.3" stroke="#c9d5e1" stroke-width="0.9"/><line x1="525.3" y1="460.8" x2="525.3" y2="463.3" stroke="#c9d5e1" stroke-width="0.9"/><line x1="530.9" y1="460.8" x2="530.9" y2="463.3" stroke="#c9d5e1" stroke-width="0.9"/><line x1="536.6" y1="460.8" x2="536.6" y2="465.8" stroke="#c9d5e1" stroke-width="0.9"/><line x1="542.2" y1="460.8" x2="542.2" y2="463.3" stroke="#c9d5e1" stroke-width="0.9"/><line x1="547.9" y1="460.8" x2="547.9" y2="463.3" stroke="#c9d5e1" stroke-width="0.9"/><line x1="553.5" y1="460.8" x2="553.5" y2="463.3" stroke="#c9d5e1" stroke-width="0.9"/><line x1="559.2" y1="460.8" x2="559.2" y2="463.3" stroke="#c9d5e1" stroke-width="0.9"/><line x1="564.9" y1="460.8" x2="564.9" y2="465.8" stroke="#c9d5e1" stroke-width="0.9"/><line x1="570.5" y1="460.8" x2="570.5" y2="463.3" stroke="#c9d5e1" stroke-width="0.9"/><line x1="576.2" y1="460.8" x2="576.2" y2="463.3" stroke="#c9d5e1" stroke-width="0.9"/><line x1="581.8" y1="460.8" x2="581.8" y2="463.3" stroke="#c9d5e1" stroke-width="0.9"/><line x1="587.5" y1="460.8" x2="587.5" y2="463.3" stroke="#c9d5e1" stroke-width="0.9"/><line x1="593.1" y1="460.8" x2="593.1" y2="465.8" stroke="#c9d5e1" stroke-width="0.9"/><line x1="598.8" y1="460.8" x2="598.8" y2="463.3" stroke="#c9d5e1" stroke-width="0.9"/><line x1="604.4" y1="460.8" x2="604.4" y2="463.3" stroke="#c9d5e1" stroke-width="0.9"/><line x1="610.1" y1="460.8" x2="610.1" y2="463.3" stroke="#c9d5e1" stroke-width="0.9"/><line x1="615.7" y1="460.8" x2="615.7" y2="463.3" stroke="#c9d5e1" stroke-width="0.9"/><line x1="621.4" y1="460.8" x2="621.4" y2="465.8" stroke="#c9d5e1" stroke-width="0.9"/><line x1="627.1" y1="460.8" x2="627.1" y2="463.3" stroke="#c9d5e1" stroke-width="0.9"/><line x1="632.7" y1="460.8" x2="632.7" y2="463.3" stroke="#c9d5e1" stroke-width="0.9"/><line x1="638.4" y1="460.8" x2="638.4" y2="463.3" stroke="#c9d5e1" stroke-width="0.9"/><line x1="644.0" y1="460.8" x2="644.0" y2="463.3" stroke="#c9d5e1" stroke-width="0.9"/><line x1="649.7" y1="460.8" x2="649.7" y2="465.8" stroke="#c9d5e1" stroke-width="0.9"/><line x1="655.3" y1="460.8" x2="655.3" y2="463.3" stroke="#c9d5e1" stroke-width="0.9"/><line x1="661.0" y1="460.8" x2="661.0" y2="463.3" stroke="#c9d5e1" stroke-width="0.9"/><line x1="666.6" y1="460.8" x2="666.6" y2="463.3" stroke="#c9d5e1" stroke-width="0.9"/><line x1="672.3" y1="460.8" x2="672.3" y2="463.3" stroke="#c9d5e1" stroke-width="0.9"/><line x1="678.0" y1="460.8" x2="678.0" y2="465.8" stroke="#c9d5e1" stroke-width="0.9"/><line x1="683.6" y1="460.8" x2="683.6" y2="463.3" stroke="#c9d5e1" stroke-width="0.9"/><line x1="689.3" y1="460.8" x2="689.3" y2="463.3" stroke="#c9d5e1" stroke-width="0.9"/><line x1="694.9" y1="460.8" x2="694.9" y2="463.3" stroke="#c9d5e1" stroke-width="0.9"/><line x1="700.6" y1="460.8" x2="700.6" y2="463.3" stroke="#c9d5e1" stroke-width="0.9"/><line x1="706.2" y1="460.8" x2="706.2" y2="465.8" stroke="#c9d5e1" stroke-width="0.9"/><line x1="711.9" y1="460.8" x2="711.9" y2="463.3" stroke="#c9d5e1" stroke-width="0.9"/><line x1="717.5" y1="460.8" x2="717.5" y2="463.3" stroke="#c9d5e1" stroke-width="0.9"/><line x1="723.2" y1="460.8" x2="723.2" y2="463.3" stroke="#c9d5e1" stroke-width="0.9"/><line x1="728.8" y1="460.8" x2="728.8" y2="463.3" stroke="#c9d5e1" stroke-width="0.9"/><line x1="734.5" y1="460.8" x2="734.5" y2="465.8" stroke="#c9d5e1" stroke-width="0.9"/><line x1="740.2" y1="460.8" x2="740.2" y2="463.3" stroke="#c9d5e1" stroke-width="0.9"/><line x1="745.8" y1="460.8" x2="745.8" y2="463.3" stroke="#c9d5e1" stroke-width="0.9"/><line x1="751.5" y1="460.8" x2="751.5" y2="463.3" stroke="#c9d5e1" stroke-width="0.9"/><line x1="757.1" y1="460.8" x2="757.1" y2="463.3" stroke="#c9d5e1" stroke-width="0.9"/><line x1="762.8" y1="460.8" x2="762.8" y2="465.8" stroke="#c9d5e1" stroke-width="0.9"/><line x1="768.4" y1="460.8" x2="768.4" y2="463.3" stroke="#c9d5e1" stroke-width="0.9"/><line x1="774.1" y1="460.8" x2="774.1" y2="463.3" stroke="#c9d5e1" stroke-width="0.9"/><line x1="779.7" y1="460.8" x2="779.7" y2="463.3" stroke="#c9d5e1" stroke-width="0.9"/><line x1="785.4" y1="460.8" x2="785.4" y2="463.3" stroke="#c9d5e1" stroke-width="0.9"/><line x1="791.1" y1="460.8" x2="791.1" y2="465.8" stroke="#c9d5e1" stroke-width="0.9"/><line x1="796.7" y1="460.8" x2="796.7" y2="463.3" stroke="#c9d5e1" stroke-width="0.9"/><line x1="802.4" y1="460.8" x2="802.4" y2="463.3" stroke="#c9d5e1" stroke-width="0.9"/><line x1="808.0" y1="460.8" x2="808.0" y2="463.3" stroke="#c9d5e1" stroke-width="0.9"/><line x1="813.7" y1="460.8" x2="813.7" y2="463.3" stroke="#c9d5e1" stroke-width="0.9"/><line x1="819.3" y1="460.8" x2="819.3" y2="465.8" stroke="#c9d5e1" stroke-width="0.9"/><line x1="825.0" y1="460.8" x2="825.0" y2="463.3" stroke="#c9d5e1" stroke-width="0.9"/><line x1="830.6" y1="460.8" x2="830.6" y2="463.3" stroke="#c9d5e1" stroke-width="0.9"/><line x1="836.3" y1="460.8" x2="836.3" y2="463.3" stroke="#c9d5e1" stroke-width="0.9"/><line x1="841.9" y1="460.8" x2="841.9" y2="463.3" stroke="#c9d5e1" stroke-width="0.9"/><line x1="847.6" y1="460.8" x2="847.6" y2="465.8" stroke="#c9d5e1" stroke-width="0.9"/><line x1="853.3" y1="460.8" x2="853.3" y2="463.3" stroke="#c9d5e1" stroke-width="0.9"/><line x1="858.9" y1="460.8" x2="858.9" y2="463.3" stroke="#c9d5e1" stroke-width="0.9"/><line x1="864.6" y1="460.8" x2="864.6" y2="463.3" stroke="#c9d5e1" stroke-width="0.9"/><line x1="870.2" y1="460.8" x2="870.2" y2="463.3" stroke="#c9d5e1" stroke-width="0.9"/><line x1="875.9" y1="460.8" x2="875.9" y2="465.8" stroke="#c9d5e1" stroke-width="0.9"/><line x1="881.5" y1="460.8" x2="881.5" y2="463.3" stroke="#c9d5e1" stroke-width="0.9"/><line x1="887.2" y1="460.8" x2="887.2" y2="463.3" stroke="#c9d5e1" stroke-width="0.9"/><line x1="892.8" y1="460.8" x2="892.8" y2="463.3" stroke="#c9d5e1" stroke-width="0.9"/><line x1="898.5" y1="460.8" x2="898.5" y2="463.3" stroke="#c9d5e1" stroke-width="0.9"/><line x1="904.1" y1="460.8" x2="904.1" y2="465.8" stroke="#c9d5e1" stroke-width="0.9"/><line x1="909.8" y1="460.8" x2="909.8" y2="463.3" stroke="#c9d5e1" stroke-width="0.9"/><line x1="915.5" y1="460.8" x2="915.5" y2="463.3" stroke="#c9d5e1" stroke-width="0.9"/><line x1="921.1" y1="460.8" x2="921.1" y2="463.3" stroke="#c9d5e1" stroke-width="0.9"/><line x1="926.8" y1="460.8" x2="926.8" y2="463.3" stroke="#c9d5e1" stroke-width="0.9"/><line x1="932.4" y1="460.8" x2="932.4" y2="465.8" stroke="#c9d5e1" stroke-width="0.9"/><line x1="938.1" y1="460.8" x2="938.1" y2="463.3" stroke="#c9d5e1" stroke-width="0.9"/><line x1="943.7" y1="460.8" x2="943.7" y2="463.3" stroke="#c9d5e1" stroke-width="0.9"/><line x1="949.4" y1="460.8" x2="949.4" y2="463.3" stroke="#c9d5e1" stroke-width="0.9"/><line x1="955.0" y1="460.8" x2="955.0" y2="463.3" stroke="#c9d5e1" stroke-width="0.9"/><line x1="960.7" y1="460.8" x2="960.7" y2="465.8" stroke="#c9d5e1" stroke-width="0.9"/><line x1="966.4" y1="460.8" x2="966.4" y2="463.3" stroke="#c9d5e1" stroke-width="0.9"/></svg><svg class="a" style="left:0;top:0" width="1024" height="548" viewBox="0 0 1024 548"><rect x="966.6" y="104" width="1.4" height="373" fill="#c3cdda"/><line x1="968" y1="123.3" x2="973" y2="123.3" stroke="#d5dde8" stroke-width="1"/><line x1="968" y1="139.2" x2="973" y2="139.2" stroke="#d5dde8" stroke-width="1"/><line x1="968" y1="151.9" x2="973" y2="151.9" stroke="#d5dde8" stroke-width="1"/><line x1="968" y1="162.0" x2="973" y2="162.0" stroke="#d5dde8" stroke-width="1"/><line x1="968" y1="176.3" x2="973" y2="176.3" stroke="#d5dde8" stroke-width="1"/><line x1="968" y1="188.6" x2="973" y2="188.6" stroke="#d5dde8" stroke-width="1"/><line x1="968" y1="131.7" x2="970.5" y2="131.7" stroke="#d5dde8" stroke-width="1"/><line x1="968" y1="145.9" x2="970.5" y2="145.9" stroke="#d5dde8" stroke-width="1"/><line x1="968" y1="157.2" x2="970.5" y2="157.2" stroke="#d5dde8" stroke-width="1"/><line x1="968" y1="166.2" x2="970.5" y2="166.2" stroke="#d5dde8" stroke-width="1"/><line x1="968" y1="170.0" x2="970.5" y2="170.0" stroke="#d5dde8" stroke-width="1"/><line x1="968" y1="173.3" x2="970.5" y2="173.3" stroke="#d5dde8" stroke-width="1"/><line x1="968" y1="179.0" x2="970.5" y2="179.0" stroke="#d5dde8" stroke-width="1"/><line x1="968" y1="181.4" x2="970.5" y2="181.4" stroke="#d5dde8" stroke-width="1"/><line x1="968" y1="183.5" x2="970.5" y2="183.5" stroke="#d5dde8" stroke-width="1"/><line x1="968" y1="185.4" x2="970.5" y2="185.4" stroke="#d5dde8" stroke-width="1"/><line x1="968" y1="187.1" x2="970.5" y2="187.1" stroke="#d5dde8" stroke-width="1"/><line x1="968" y1="191.1" x2="970.5" y2="191.1" stroke="#d5dde8" stroke-width="1"/><line x1="968" y1="193.1" x2="970.5" y2="193.1" stroke="#d5dde8" stroke-width="1"/><line x1="968" y1="278.4" x2="973" y2="278.4" stroke="#d5dde8" stroke-width="1"/><line x1="968" y1="262.5" x2="973" y2="262.5" stroke="#d5dde8" stroke-width="1"/><line x1="968" y1="249.8" x2="973" y2="249.8" stroke="#d5dde8" stroke-width="1"/><line x1="968" y1="239.7" x2="973" y2="239.7" stroke="#d5dde8" stroke-width="1"/><line x1="968" y1="225.4" x2="973" y2="225.4" stroke="#d5dde8" stroke-width="1"/><line x1="968" y1="213.1" x2="973" y2="213.1" stroke="#d5dde8" stroke-width="1"/><line x1="968" y1="270.0" x2="970.5" y2="270.0" stroke="#d5dde8" stroke-width="1"/><line x1="968" y1="255.8" x2="970.5" y2="255.8" stroke="#d5dde8" stroke-width="1"/><line x1="968" y1="244.5" x2="970.5" y2="244.5" stroke="#d5dde8" stroke-width="1"/><line x1="968" y1="235.5" x2="970.5" y2="235.5" stroke="#d5dde8" stroke-width="1"/><line x1="968" y1="231.7" x2="970.5" y2="231.7" stroke="#d5dde8" stroke-width="1"/><line x1="968" y1="228.4" x2="970.5" y2="228.4" stroke="#d5dde8" stroke-width="1"/><line x1="968" y1="222.7" x2="970.5" y2="222.7" stroke="#d5dde8" stroke-width="1"/><line x1="968" y1="220.3" x2="970.5" y2="220.3" stroke="#d5dde8" stroke-width="1"/><line x1="968" y1="218.2" x2="970.5" y2="218.2" stroke="#d5dde8" stroke-width="1"/><line x1="968" y1="216.3" x2="970.5" y2="216.3" stroke="#d5dde8" stroke-width="1"/><line x1="968" y1="214.6" x2="970.5" y2="214.6" stroke="#d5dde8" stroke-width="1"/><line x1="968" y1="210.6" x2="970.5" y2="210.6" stroke="#d5dde8" stroke-width="1"/><line x1="968" y1="208.6" x2="970.5" y2="208.6" stroke="#d5dde8" stroke-width="1"/><line x1="968" y1="200.8" x2="973" y2="200.8" stroke="#d5dde8" stroke-width="1"/><line x1="968" y1="293.3" x2="973" y2="293.3" stroke="#d5dde8" stroke-width="1"/><line x1="968" y1="309.2" x2="973" y2="309.2" stroke="#d5dde8" stroke-width="1"/><line x1="968" y1="321.8" x2="973" y2="321.8" stroke="#d5dde8" stroke-width="1"/><line x1="968" y1="331.9" x2="973" y2="331.9" stroke="#d5dde8" stroke-width="1"/><line x1="968" y1="346.2" x2="973" y2="346.2" stroke="#d5dde8" stroke-width="1"/><line x1="968" y1="358.4" x2="973" y2="358.4" stroke="#d5dde8" stroke-width="1"/><line x1="968" y1="301.7" x2="970.5" y2="301.7" stroke="#d5dde8" stroke-width="1"/><line x1="968" y1="315.9" x2="970.5" y2="315.9" stroke="#d5dde8" stroke-width="1"/><line x1="968" y1="327.2" x2="970.5" y2="327.2" stroke="#d5dde8" stroke-width="1"/><line x1="968" y1="336.1" x2="970.5" y2="336.1" stroke="#d5dde8" stroke-width="1"/><line x1="968" y1="339.9" x2="970.5" y2="339.9" stroke="#d5dde8" stroke-width="1"/><line x1="968" y1="343.2" x2="970.5" y2="343.2" stroke="#d5dde8" stroke-width="1"/><line x1="968" y1="348.8" x2="970.5" y2="348.8" stroke="#d5dde8" stroke-width="1"/><line x1="968" y1="351.2" x2="970.5" y2="351.2" stroke="#d5dde8" stroke-width="1"/><line x1="968" y1="353.3" x2="970.5" y2="353.3" stroke="#d5dde8" stroke-width="1"/><line x1="968" y1="355.2" x2="970.5" y2="355.2" stroke="#d5dde8" stroke-width="1"/><line x1="968" y1="356.9" x2="970.5" y2="356.9" stroke="#d5dde8" stroke-width="1"/><line x1="968" y1="360.9" x2="970.5" y2="360.9" stroke="#d5dde8" stroke-width="1"/><line x1="968" y1="362.9" x2="970.5" y2="362.9" stroke="#d5dde8" stroke-width="1"/><line x1="968" y1="448.0" x2="973" y2="448.0" stroke="#d5dde8" stroke-width="1"/><line x1="968" y1="432.1" x2="973" y2="432.1" stroke="#d5dde8" stroke-width="1"/><line x1="968" y1="419.5" x2="973" y2="419.5" stroke="#d5dde8" stroke-width="1"/><line x1="968" y1="409.4" x2="973" y2="409.4" stroke="#d5dde8" stroke-width="1"/><line x1="968" y1="395.1" x2="973" y2="395.1" stroke="#d5dde8" stroke-width="1"/><line x1="968" y1="382.9" x2="973" y2="382.9" stroke="#d5dde8" stroke-width="1"/><line x1="968" y1="439.6" x2="970.5" y2="439.6" stroke="#d5dde8" stroke-width="1"/><line x1="968" y1="425.4" x2="970.5" y2="425.4" stroke="#d5dde8" stroke-width="1"/><line x1="968" y1="414.1" x2="970.5" y2="414.1" stroke="#d5dde8" stroke-width="1"/><line x1="968" y1="405.2" x2="970.5" y2="405.2" stroke="#d5dde8" stroke-width="1"/><line x1="968" y1="401.4" x2="970.5" y2="401.4" stroke="#d5dde8" stroke-width="1"/><line x1="968" y1="398.1" x2="970.5" y2="398.1" stroke="#d5dde8" stroke-width="1"/><line x1="968" y1="392.5" x2="970.5" y2="392.5" stroke="#d5dde8" stroke-width="1"/><line x1="968" y1="390.1" x2="970.5" y2="390.1" stroke="#d5dde8" stroke-width="1"/><line x1="968" y1="388.0" x2="970.5" y2="388.0" stroke="#d5dde8" stroke-width="1"/><line x1="968" y1="386.1" x2="970.5" y2="386.1" stroke="#d5dde8" stroke-width="1"/><line x1="968" y1="384.4" x2="970.5" y2="384.4" stroke="#d5dde8" stroke-width="1"/><line x1="968" y1="380.4" x2="970.5" y2="380.4" stroke="#d5dde8" stroke-width="1"/><line x1="968" y1="378.4" x2="970.5" y2="378.4" stroke="#d5dde8" stroke-width="1"/><line x1="968" y1="370.6" x2="973" y2="370.6" stroke="#d5dde8" stroke-width="1"/><rect x="995.5" y="116.8" width="8.2" height="345" fill="#b9c3cf"/><rect x="996.3" y="117.6" width="6.6" height="343.4" fill="#000"/><rect x="1009.3" y="116.8" width="8.2" height="345" fill="#b9c3cf"/><rect x="1010.0999999999999" y="117.6" width="6.6" height="343.4" fill="#000"/></svg><div class="t" style="left:899.00px;width:160px;text-align:center;top:104.02px;font-size:7.84px;color:#b9c4d3;transform:scaleX(0.8929);transform-origin:center center;">dB</div><div class="t" style="left:975px;top:120.52px;font-size:7.84px;color:#c5cfdc;transform:scaleX(0.8929);transform-origin:left center;">0</div><div class="t" style="left:975.5px;top:136.47px;font-size:7.84px;color:#c5cfdc;transform:scaleX(0.8929);transform-origin:left center;">-2</div><div class="t" style="left:975.5px;top:149.14px;font-size:7.84px;color:#c5cfdc;transform:scaleX(0.8929);transform-origin:left center;">-4</div><div class="t" style="left:975.5px;top:159.20px;font-size:7.84px;color:#c5cfdc;transform:scaleX(0.8929);transform-origin:left center;">-6</div><div class="t" style="left:975.5px;top:173.55px;font-size:7.84px;color:#c5cfdc;transform:scaleX(0.8929);transform-origin:left center;">-10</div><div class="t" style="left:975.5px;top:185.78px;font-size:7.84px;color:#c5cfdc;transform:scaleX(0.8929);transform-origin:left center;">-16</div><div class="t" style="left:975px;top:275.62px;font-size:7.84px;color:#c5cfdc;transform:scaleX(0.8929);transform-origin:left center;">0</div><div class="t" style="left:975.5px;top:259.67px;font-size:7.84px;color:#c5cfdc;transform:scaleX(0.8929);transform-origin:left center;">-2</div><div class="t" style="left:975.5px;top:247.00px;font-size:7.84px;color:#c5cfdc;transform:scaleX(0.8929);transform-origin:left center;">-4</div><div class="t" style="left:975.5px;top:236.94px;font-size:7.84px;color:#c5cfdc;transform:scaleX(0.8929);transform-origin:left center;">-6</div><div class="t" style="left:975.5px;top:222.59px;font-size:7.84px;color:#c5cfdc;transform:scaleX(0.8929);transform-origin:left center;">-10</div><div class="t" style="left:975.5px;top:210.36px;font-size:7.84px;color:#c5cfdc;transform:scaleX(0.8929);transform-origin:left center;">-16</div><div class="t" style="left:975.5px;top:197.57px;font-size:7.84px;color:#c5cfdc;transform:scaleX(0.8929);transform-origin:left center;">-∞</div><div class="t" style="left:975px;top:290.52px;font-size:7.84px;color:#c5cfdc;transform:scaleX(0.8929);transform-origin:left center;">0</div><div class="t" style="left:975.5px;top:306.43px;font-size:7.84px;color:#c5cfdc;transform:scaleX(0.8929);transform-origin:left center;">-2</div><div class="t" style="left:975.5px;top:319.07px;font-size:7.84px;color:#c5cfdc;transform:scaleX(0.8929);transform-origin:left center;">-4</div><div class="t" style="left:975.5px;top:329.10px;font-size:7.84px;color:#c5cfdc;transform:scaleX(0.8929);transform-origin:left center;">-6</div><div class="t" style="left:975.5px;top:343.41px;font-size:7.84px;color:#c5cfdc;transform:scaleX(0.8929);transform-origin:left center;">-10</div><div class="t" style="left:975.5px;top:355.61px;font-size:7.84px;color:#c5cfdc;transform:scaleX(0.8929);transform-origin:left center;">-16</div><div class="t" style="left:975px;top:445.22px;font-size:7.84px;color:#c5cfdc;transform:scaleX(0.8929);transform-origin:left center;">0</div><div class="t" style="left:975.5px;top:429.31px;font-size:7.84px;color:#c5cfdc;transform:scaleX(0.8929);transform-origin:left center;">-2</div><div class="t" style="left:975.5px;top:416.68px;font-size:7.84px;color:#c5cfdc;transform:scaleX(0.8929);transform-origin:left center;">-4</div><div class="t" style="left:975.5px;top:406.64px;font-size:7.84px;color:#c5cfdc;transform:scaleX(0.8929);transform-origin:left center;">-6</div><div class="t" style="left:975.5px;top:392.33px;font-size:7.84px;color:#c5cfdc;transform:scaleX(0.8929);transform-origin:left center;">-10</div><div class="t" style="left:975.5px;top:380.13px;font-size:7.84px;color:#c5cfdc;transform:scaleX(0.8929);transform-origin:left center;">-16</div><div class="t" style="left:975.5px;top:367.37px;font-size:7.84px;color:#c5cfdc;transform:scaleX(0.8929);transform-origin:left center;">-∞</div><div class="t" style="left:170px;top:468.72px;font-size:7.84px;color:#c9d5e2;transform:scaleX(0.8929);transform-origin:left center;">hms</div><div class="t" style="left:145.55px;width:160px;text-align:center;top:468.72px;font-size:7.84px;color:#cdd8e4;transform:scaleX(0.8929);transform-origin:center center;">0.10</div><div class="t" style="left:173.83px;width:160px;text-align:center;top:468.72px;font-size:7.84px;color:#cdd8e4;transform:scaleX(0.8929);transform-origin:center center;">0.15</div><div class="t" style="left:202.10px;width:160px;text-align:center;top:468.72px;font-size:7.84px;color:#cdd8e4;transform:scaleX(0.8929);transform-origin:center center;">0.20</div><div class="t" style="left:230.38px;width:160px;text-align:center;top:468.72px;font-size:7.84px;color:#cdd8e4;transform:scaleX(0.8929);transform-origin:center center;">0.25</div><div class="t" style="left:258.65px;width:160px;text-align:center;top:468.72px;font-size:7.84px;color:#cdd8e4;transform:scaleX(0.8929);transform-origin:center center;">0.30</div><div class="t" style="left:286.93px;width:160px;text-align:center;top:468.72px;font-size:7.84px;color:#cdd8e4;transform:scaleX(0.8929);transform-origin:center center;">0.35</div><div class="t" style="left:315.20px;width:160px;text-align:center;top:468.72px;font-size:7.84px;color:#cdd8e4;transform:scaleX(0.8929);transform-origin:center center;">0.40</div><div class="t" style="left:343.48px;width:160px;text-align:center;top:468.72px;font-size:7.84px;color:#cdd8e4;transform:scaleX(0.8929);transform-origin:center center;">0.45</div><div class="t" style="left:371.75px;width:160px;text-align:center;top:468.72px;font-size:7.84px;color:#cdd8e4;transform:scaleX(0.8929);transform-origin:center center;">0.50</div><div class="t" style="left:400.03px;width:160px;text-align:center;top:468.72px;font-size:7.84px;color:#cdd8e4;transform:scaleX(0.8929);transform-origin:center center;">0.55</div><div class="t" style="left:428.30px;width:160px;text-align:center;top:468.72px;font-size:7.84px;color:#cdd8e4;transform:scaleX(0.8929);transform-origin:center center;">0.60</div><div class="t" style="left:456.58px;width:160px;text-align:center;top:468.72px;font-size:7.84px;color:#cdd8e4;transform:scaleX(0.8929);transform-origin:center center;">0.65</div><div class="t" style="left:484.85px;width:160px;text-align:center;top:468.72px;font-size:7.84px;color:#cdd8e4;transform:scaleX(0.8929);transform-origin:center center;">0.70</div><div class="t" style="left:513.12px;width:160px;text-align:center;top:468.72px;font-size:7.84px;color:#cdd8e4;transform:scaleX(0.8929);transform-origin:center center;">0.75</div><div class="t" style="left:541.40px;width:160px;text-align:center;top:468.72px;font-size:7.84px;color:#cdd8e4;transform:scaleX(0.8929);transform-origin:center center;">0.80</div><div class="t" style="left:569.68px;width:160px;text-align:center;top:468.72px;font-size:7.84px;color:#cdd8e4;transform:scaleX(0.8929);transform-origin:center center;">0.85</div><div class="t" style="left:597.95px;width:160px;text-align:center;top:468.72px;font-size:7.84px;color:#cdd8e4;transform:scaleX(0.8929);transform-origin:center center;">0.90</div><div class="t" style="left:626.23px;width:160px;text-align:center;top:468.72px;font-size:7.84px;color:#cdd8e4;transform:scaleX(0.8929);transform-origin:center center;">0.95</div><div class="t" style="left:654.50px;width:160px;text-align:center;top:468.72px;font-size:7.84px;color:#cdd8e4;transform:scaleX(0.8929);transform-origin:center center;">1.00</div><div class="t" style="left:682.77px;width:160px;text-align:center;top:468.72px;font-size:7.84px;color:#cdd8e4;transform:scaleX(0.8929);transform-origin:center center;">1.05</div><div class="t" style="left:711.05px;width:160px;text-align:center;top:468.72px;font-size:7.84px;color:#cdd8e4;transform:scaleX(0.8929);transform-origin:center center;">1.10</div><div class="t" style="left:739.33px;width:160px;text-align:center;top:468.72px;font-size:7.84px;color:#cdd8e4;transform:scaleX(0.8929);transform-origin:center center;">1.15</div><div class="t" style="left:767.60px;width:160px;text-align:center;top:468.72px;font-size:7.84px;color:#cdd8e4;transform:scaleX(0.8929);transform-origin:center center;">1.20</div><div class="t" style="left:795.88px;width:160px;text-align:center;top:468.72px;font-size:7.84px;color:#cdd8e4;transform:scaleX(0.8929);transform-origin:center center;">1.25</div><div class="t" style="left:824.15px;width:160px;text-align:center;top:468.72px;font-size:7.84px;color:#cdd8e4;transform:scaleX(0.8929);transform-origin:center center;">1.30</div><div class="t" style="left:852.43px;width:160px;text-align:center;top:468.72px;font-size:7.84px;color:#cdd8e4;transform:scaleX(0.8929);transform-origin:center center;">1.35</div><div class="t" style="left:880.70px;width:160px;text-align:center;top:468.72px;font-size:7.84px;color:#cdd8e4;transform:scaleX(0.8929);transform-origin:center center;">1.40</div><div class="a" style="left:0px;top:102.6px;width:168px;height:430px;background:#e9ecf4"></div><div class="a" style="left:2.1px;top:103.9px;width:26.4px;height:13px;background:#eef1f7"></div><div class="a" style="left:28.5px;top:103.9px;width:34.9px;height:12.4px;background:#dde3ed"></div><div class="a" style="left:63.4px;top:103.9px;width:43.2px;height:12.4px;background:#dde3ed"></div><div class="a" style="left:28.3px;top:104px;width:0.8px;height:12.3px;background:#cfd6e2"></div><div class="a" style="left:63.2px;top:104px;width:0.8px;height:12.3px;background:#cfd6e2"></div><div class="a" style="left:0.5px;top:116.3px;width:166px;height:415.5px;background:#eceff6;border:1px solid #d5dbe6;border-top:none"></div><div class="a" style="left:7.5px;top:123.4px;width:153px;height:404.8px;background:#fff;border:1px solid #d6dce7"></div><div class="t" style="left:7.4px;top:106.66px;font-size:8.18px;color:#222;transform:scaleX(0.8929);transform-origin:left center;">Files</div><div class="t" style="left:33.7px;top:106.96px;font-size:8.18px;color:#222;transform:scaleX(0.8929);transform-origin:left center;">Effects</div><div class="t" style="left:69.2px;top:106.96px;font-size:8.18px;color:#222;transform:scaleX(0.8929);transform-origin:left center;">Favorites</div><div class="a" style="left:167.3px;top:102.6px;width:1.5px;height:430px;background:#d0d7e2"></div><div class="a" style="left:169px;top:478.2px;width:855px;height:53.8px;background:#eceff6"></div><div class="a" style="left:0px;top:531.6px;width:1024px;height:1px;background:#d5dae3"></div><div class="a" style="left:0px;top:532.6px;width:1024px;height:15.4px;background:#f3f4f9"></div><div class="a" style="left:348px;top:480px;width:1px;height:51.5px;background:#c9ced8"></div><div class="a" style="left:828px;top:480px;width:1px;height:51.5px;background:#c9ced8"></div><div class="a" style="left:684.5px;top:533px;width:1px;height:15px;background:#dadee6"></div><div class="a" style="left:894.2px;top:533px;width:1px;height:15px;background:#dadee6"></div><div class="a" style="left:959.9px;top:533px;width:1px;height:15px;background:#dadee6"></div><div class="t" style="left:689.4px;top:538.35px;font-size:7.99px;color:#222;transform:scaleX(0.8929);transform-origin:left center;">44100 Hz, 16-bit, 2 Channels</div><div class="t" style="left:899.7px;top:538.35px;font-size:7.99px;color:#222;transform:scaleX(0.8929);transform-origin:left center;">0.237 Mb</div><div class="t" style="left:964.4px;top:538.35px;font-size:7.99px;color:#222;transform:scaleX(0.8929);transform-origin:left center;">00:00:01.411</div><div class="t" style="left:443.9px;top:482.6px;font-size:51px;color:#000;letter-spacing:-0.77px;-webkit-text-stroke:0.35px #000">00:00:00.000</div><div class="t" style="left:870.8px;top:485.86px;font-size:8.18px;color:#222;transform:scaleX(0.8929);transform-origin:left center;">Start</div><div class="t" style="left:919.6px;top:485.86px;font-size:8.18px;color:#222;transform:scaleX(0.8929);transform-origin:left center;">End</div><div class="t" style="left:969.8px;top:485.86px;font-size:8.18px;color:#222;transform:scaleX(0.8929);transform-origin:left center;">Length</div><div class="t" style="left:703.40px;width:160px;text-align:right;top:498.36px;font-size:8.18px;color:#222;transform:scaleX(0.8929);transform-origin:right center;">Selection</div><div class="t" style="left:703.40px;width:160px;text-align:right;top:514.06px;font-size:8.18px;color:#222;transform:scaleX(0.8929);transform-origin:right center;">View</div><div class="a" style="left:870.8px;top:495.5px;width:47.80000000000007px;height:12.4px;background:#fff;border:1px solid #dfe3ea"></div><div class="t" style="left:872.8px;top:498.51px;font-size:8.29px;color:#222;transform:scaleX(0.8929);transform-origin:left center;">00:00:00.000</div><div class="a" style="left:920.6px;top:495.5px;width:47.39999999999998px;height:12.4px;background:#fff;border:1px solid #dfe3ea"></div><div class="t" style="left:922.6px;top:498.51px;font-size:8.29px;color:#222;transform:scaleX(0.8929);transform-origin:left center;">00:00:01.411</div><div class="a" style="left:969.8px;top:495.5px;width:47.40000000000009px;height:12.4px;background:#fff;border:1px solid #dfe3ea"></div><div class="t" style="left:971.8px;top:498.51px;font-size:8.29px;color:#222;transform:scaleX(0.8929);transform-origin:left center;">00:00:01.411</div><div class="a" style="left:870.8px;top:511.9px;width:47.80000000000007px;height:12.4px;background:#fff;border:1px solid #dfe3ea"></div><div class="t" style="left:872.8px;top:514.91px;font-size:8.29px;color:#222;transform:scaleX(0.8929);transform-origin:left center;">00:00:00.000</div><div class="a" style="left:920.6px;top:511.9px;width:47.39999999999998px;height:12.4px;background:#fff;border:1px solid #dfe3ea"></div><div class="t" style="left:922.6px;top:514.91px;font-size:8.29px;color:#222;transform:scaleX(0.8929);transform-origin:left center;">00:00:01.411</div><div class="a" style="left:969.8px;top:511.9px;width:47.40000000000009px;height:12.4px;background:#fff;border:1px solid #dfe3ea"></div><div class="t" style="left:971.8px;top:514.91px;font-size:8.29px;color:#222;transform:scaleX(0.8929);transform-origin:left center;">00:00:01.411</div><svg class="a" style="left:0;top:0" width="1024" height="548" viewBox="0 0 1024 548"><rect x="172" y="487.6" width="93.0" height="37" fill="#d9e0ec" stroke="#bdc7d6" stroke-width="0.9"/><line x1="190.6" y1="487.6" x2="190.6" y2="524.6" stroke="#bdc7d6" stroke-width="0.9"/><line x1="209.2" y1="487.6" x2="209.2" y2="524.6" stroke="#bdc7d6" stroke-width="0.9"/><line x1="227.8" y1="487.6" x2="227.8" y2="524.6" stroke="#bdc7d6" stroke-width="0.9"/><line x1="246.4" y1="487.6" x2="246.4" y2="524.6" stroke="#bdc7d6" stroke-width="0.9"/><line x1="172" y1="506.1" x2="265.0" y2="506.1" stroke="#bdc7d6" stroke-width="0.9"/><rect x="269.3" y="487.6" width="74.4" height="37" fill="#d9e0ec" stroke="#bdc7d6" stroke-width="0.9"/><line x1="287.9" y1="487.6" x2="287.9" y2="524.6" stroke="#bdc7d6" stroke-width="0.9"/><line x1="306.5" y1="487.6" x2="306.5" y2="524.6" stroke="#bdc7d6" stroke-width="0.9"/><line x1="325.1" y1="487.6" x2="325.1" y2="524.6" stroke="#bdc7d6" stroke-width="0.9"/><line x1="269.3" y1="506.1" x2="343.7" y2="506.1" stroke="#bdc7d6" stroke-width="0.9"/><path d="M178.3 492.9 L185.3 496.9 L178.3 500.9 Z" fill="#3c4350"/><path d="M200.4 494.9 H203.70000000000002 V499.9 H196.1 V494.9 H197.4" fill="none" stroke="#3c4350" stroke-width="1.3" stroke-linejoin="round"/><path d="M198.1 492.4 L200.9 494.9 L198.1 497.4 Z" fill="#3c4350"/><path d="M215.0 493.4 L220.0 496.9 L215.0 500.4 Z" fill="#3c4350"/><rect x="220.5" y="493.4" width="1.4" height="7" fill="#3c4350"/><path d="M233.3 496.9 L236.8 493.9 V499.9 Z M237.10000000000002 496.9 L240.60000000000002 493.9 V499.9 Z" fill="#3c4350"/><path d="M259.5 496.9 L256.0 493.9 V499.9 Z M255.70000000000002 496.9 L252.20000000000002 493.9 V499.9 Z" fill="#3c4350"/><rect x="178.3" y="512.4" width="6" height="6" fill="#3c4350"/><rect x="196.9" y="512.1" width="2" height="6.6" fill="#3c4350"/><rect x="200.9" y="512.1" width="2" height="6.6" fill="#3c4350"/><circle cx="218.5" cy="515.4" r="3.2" fill="#f04a23"/><path d="M233.10000000000002 511.9 V518.9 M232.10000000000002 511.9 H234.10000000000002 M232.10000000000002 518.9 H234.10000000000002" stroke="#3c4350" stroke-width="0.9"/><path d="M234.60000000000002 515.4 L237.90000000000003 512.6 V518.1999999999999 Z M237.90000000000003 515.4 L241.10000000000002 512.6 V518.1999999999999 Z" fill="#3c4350"/><path d="M259.70000000000005 511.9 V518.9 M260.70000000000005 511.9 H258.70000000000005 M260.70000000000005 518.9 H258.70000000000005" stroke="#3c4350" stroke-width="0.9"/><path d="M258.20000000000005 515.4 L254.9 512.6 V518.1999999999999 Z M254.9 515.4 L251.70000000000002 512.6 V518.1999999999999 Z" fill="#3c4350"/><circle cx="277.6" cy="495.9" r="3.9" fill="none" stroke="#3c4350" stroke-width="1.3"/><path d="M280.40000000000003 498.7 L282.90000000000003 501.2" stroke="#3c4350" stroke-width="1.8" stroke-linecap="round"/><path d="M276.1 496.09999999999997 H279.5 M277.8 494.4 V497.79999999999995" stroke="#3c4350" stroke-width="0.7"/><circle cx="296.20000000000005" cy="495.9" r="3.9" fill="none" stroke="#3c4350" stroke-width="1.3"/><path d="M299.00000000000006 498.7 L301.50000000000006 501.2" stroke="#3c4350" stroke-width="1.8" stroke-linecap="round"/><path d="M294.70000000000005 496.09999999999997 H298.1" stroke="#3c4350" stroke-width="0.8"/><circle cx="314.8" cy="495.9" r="3.9" fill="none" stroke="#3c4350" stroke-width="1.3"/><path d="M317.6 498.7 L320.1 501.2" stroke="#3c4350" stroke-width="1.8" stroke-linecap="round"/><path d="M312.8 501.09999999999997 h5" stroke="#3c4350" stroke-width="1" stroke-dasharray="1 0.6"/><circle cx="335.6" cy="495.9" r="3.9" fill="none" stroke="#3c4350" stroke-width="1.3"/><path d="M338.40000000000003 498.7 L340.90000000000003 501.2" stroke="#3c4350" stroke-width="1.8" stroke-linecap="round"/><path d="M328.20000000000005 495.7 l1.6 -2.4 l1.6 2.4 z M328.20000000000005 498.09999999999997 l1.6 2.4 l1.6 -2.4 z" fill="#3c4350"/><circle cx="279.40000000000003" cy="514.4" r="3.9" fill="none" stroke="#3c4350" stroke-width="1.3"/><path d="M282.20000000000005 517.1999999999999 L284.70000000000005 519.6999999999999" stroke="#3c4350" stroke-width="1.8" stroke-linecap="round"/><path d="M274.40000000000003 511.2 h-1.4 v8.4 h1.4" fill="none" stroke="#3c4350" stroke-width="1.1"/><circle cx="296.20000000000005" cy="514.4" r="3.9" fill="none" stroke="#3c4350" stroke-width="1.3"/><path d="M299.00000000000006 517.1999999999999 L301.50000000000006 519.6999999999999" stroke="#3c4350" stroke-width="1.8" stroke-linecap="round"/><path d="M294.70000000000005 514.6 H298.1 M296.40000000000003 512.9 V516.3" stroke="#3c4350" stroke-width="0.6" stroke-dasharray="0.8 0.5"/><circle cx="313.2" cy="514.4" r="3.9" fill="none" stroke="#3c4350" stroke-width="1.3"/><path d="M316.0 517.1999999999999 L318.5 519.6999999999999" stroke="#3c4350" stroke-width="1.8" stroke-linecap="round"/><path d="M320.0 511.2 h1.4 v8.4 h-1.4" fill="none" stroke="#3c4350" stroke-width="1.1"/><circle cx="335.6" cy="514.4" r="3.9" fill="none" stroke="#3c4350" stroke-width="1.3"/><path d="M338.40000000000003 517.1999999999999 L340.90000000000003 519.6999999999999" stroke="#3c4350" stroke-width="1.8" stroke-linecap="round"/><path d="M328.20000000000005 514.1999999999999 l1.6 -2.4 l1.6 2.4 z M328.20000000000005 516.6 l1.6 2.4 l1.6 -2.4 z" fill="#3c4350"/></svg><div class="a" style="left:242px;top:115px;width:431px;height:315px;background:#a7bddc"></div><div class="a" style="left:242px;top:115px;width:1.2px;height:315px;background:#bccde6"></div><div class="a" style="left:671.8px;top:115px;width:1.2px;height:315px;background:#8ea6c8"></div><div class="a" style="left:242px;top:428.8px;width:431px;height:1.2px;background:#8ea6c8"></div><div class="t" style="left:250.7px;top:121.71px;font-size:9.52px;color:#1c2230;transform:scaleX(0.8929);transform-origin:left center;">Fade In/Fade Out</div><div class="a" style="left:247.3px;top:135.7px;width:420.6px;height:288.3px;background:#e9ecf4"></div><div class="a" style="left:247.3px;top:135.7px;width:420.6px;height:56.2px;background:#4d5565"></div><div class="t" style="left:253.2px;top:141.54px;font-size:8.62px;color:#f2f4f7;transform:scaleX(0.8929);transform-origin:left center;"><b>Effect Description</b></div><div class="t" style="left:252.6px;top:161.70px;font-size:8.09px;color:#e2e6ec;transform:scaleX(0.8929);transform-origin:left center;">Increases or decreases the sound volume gradually. Use Fade In to increase the sound volume. Use Fade Out to decrease the</div><div class="t" style="left:252.6px;top:170.40px;font-size:8.09px;color:#e2e6ec;transform:scaleX(0.8929);transform-origin:left center;">sound volume.</div><div class="t" style="left:623.7px;top:179.64px;font-size:8.01px;color:#eef1f5;transform:scaleX(0.8929);transform-origin:left center;"><u>Learn More</u></div><div class="a" style="left:253.2px;top:195.2px;width:413.6px;height:196.3px;background:#edf0f6;border:1px solid #cfd6e2"></div><div class="a" style="left:253.2px;top:195.2px;width:413.6px;height:15.3px;background:#dee3ee;border:1px solid #cfd6e2"></div><div class="t" style="left:257.9px;top:200.17px;font-size:9.18px;color:#1a1e26;transform:scaleX(0.8929);transform-origin:left center;"><b>Parameters</b></div><div class="a" style="left:247.3px;top:397px;width:420.6px;height:1px;background:#d3d9e3"></div><svg class="a" style="left:0;top:0" width="1024" height="548" viewBox="0 0 1024 548"><rect x="259.2" y="216.4" width="23" height="149.4" fill="#afbac6"/><rect x="637.7" y="216.4" width="23.1" height="149.4" fill="#afbac6"/><rect x="282.2" y="216.4" width="355.5" height="149.4" fill="#2a2a2a"/><line x1="328.4" y1="216.4" x2="328.4" y2="365.8" stroke="#313131" stroke-width="0.9"/><line x1="374.4" y1="216.4" x2="374.4" y2="365.8" stroke="#313131" stroke-width="0.9"/><line x1="420.4" y1="216.4" x2="420.4" y2="365.8" stroke="#313131" stroke-width="0.9"/><line x1="466.5" y1="216.4" x2="466.5" y2="365.8" stroke="#313131" stroke-width="0.9"/><line x1="512.5" y1="216.4" x2="512.5" y2="365.8" stroke="#313131" stroke-width="0.9"/><line x1="558.6" y1="216.4" x2="558.6" y2="365.8" stroke="#313131" stroke-width="0.9"/><line x1="604.6" y1="216.4" x2="604.6" y2="365.8" stroke="#313131" stroke-width="0.9"/><line x1="282.2" y1="227.6" x2="637.7" y2="227.6" stroke="#313131" stroke-width="0.8" stroke-dasharray="2 3"/><line x1="282.2" y1="248.6" x2="637.7" y2="248.6" stroke="#313131" stroke-width="0.8" stroke-dasharray="2 3"/><line x1="282.2" y1="269.6" x2="637.7" y2="269.6" stroke="#313131" stroke-width="0.8" stroke-dasharray="2 3"/><line x1="282.2" y1="311.6" x2="637.7" y2="311.6" stroke="#313131" stroke-width="0.8" stroke-dasharray="2 3"/><line x1="282.2" y1="332.6" x2="637.7" y2="332.6" stroke="#313131" stroke-width="0.8" stroke-dasharray="2 3"/><line x1="282.2" y1="353.6" x2="637.7" y2="353.6" stroke="#313131" stroke-width="0.8" stroke-dasharray="2 3"/><line x1="279.2" y1="220.6" x2="282.2" y2="220.6" stroke="#333" stroke-width="0.9"/><line x1="637.7" y1="220.6" x2="640.7" y2="220.6" stroke="#333" stroke-width="0.9"/><line x1="278.0" y1="227.7" x2="282.2" y2="227.7" stroke="#333" stroke-width="0.9"/><line x1="637.7" y1="227.7" x2="641.9000000000001" y2="227.7" stroke="#333" stroke-width="0.9"/><line x1="279.2" y1="234.8" x2="282.2" y2="234.8" stroke="#333" stroke-width="0.9"/><line x1="637.7" y1="234.8" x2="640.7" y2="234.8" stroke="#333" stroke-width="0.9"/><line x1="279.2" y1="241.9" x2="282.2" y2="241.9" stroke="#333" stroke-width="0.9"/><line x1="637.7" y1="241.9" x2="640.7" y2="241.9" stroke="#333" stroke-width="0.9"/><line x1="278.0" y1="249.0" x2="282.2" y2="249.0" stroke="#333" stroke-width="0.9"/><line x1="637.7" y1="249.0" x2="641.9000000000001" y2="249.0" stroke="#333" stroke-width="0.9"/><line x1="279.2" y1="256.1" x2="282.2" y2="256.1" stroke="#333" stroke-width="0.9"/><line x1="637.7" y1="256.1" x2="640.7" y2="256.1" stroke="#333" stroke-width="0.9"/><line x1="279.2" y1="263.2" x2="282.2" y2="263.2" stroke="#333" stroke-width="0.9"/><line x1="637.7" y1="263.2" x2="640.7" y2="263.2" stroke="#333" stroke-width="0.9"/><line x1="278.0" y1="270.3" x2="282.2" y2="270.3" stroke="#333" stroke-width="0.9"/><line x1="637.7" y1="270.3" x2="641.9000000000001" y2="270.3" stroke="#333" stroke-width="0.9"/><line x1="279.2" y1="277.4" x2="282.2" y2="277.4" stroke="#333" stroke-width="0.9"/><line x1="637.7" y1="277.4" x2="640.7" y2="277.4" stroke="#333" stroke-width="0.9"/><line x1="279.2" y1="284.5" x2="282.2" y2="284.5" stroke="#333" stroke-width="0.9"/><line x1="637.7" y1="284.5" x2="640.7" y2="284.5" stroke="#333" stroke-width="0.9"/><line x1="278.0" y1="291.6" x2="282.2" y2="291.6" stroke="#333" stroke-width="0.9"/><line x1="637.7" y1="291.6" x2="641.9000000000001" y2="291.6" stroke="#333" stroke-width="0.9"/><line x1="279.2" y1="298.7" x2="282.2" y2="298.7" stroke="#333" stroke-width="0.9"/><line x1="637.7" y1="298.7" x2="640.7" y2="298.7" stroke="#333" stroke-width="0.9"/><line x1="279.2" y1="305.8" x2="282.2" y2="305.8" stroke="#333" stroke-width="0.9"/><line x1="637.7" y1="305.8" x2="640.7" y2="305.8" stroke="#333" stroke-width="0.9"/><line x1="278.0" y1="312.9" x2="282.2" y2="312.9" stroke="#333" stroke-width="0.9"/><line x1="637.7" y1="312.9" x2="641.9000000000001" y2="312.9" stroke="#333" stroke-width="0.9"/><line x1="279.2" y1="320.0" x2="282.2" y2="320.0" stroke="#333" stroke-width="0.9"/><line x1="637.7" y1="320.0" x2="640.7" y2="320.0" stroke="#333" stroke-width="0.9"/><line x1="279.2" y1="327.1" x2="282.2" y2="327.1" stroke="#333" stroke-width="0.9"/><line x1="637.7" y1="327.1" x2="640.7" y2="327.1" stroke="#333" stroke-width="0.9"/><line x1="278.0" y1="334.2" x2="282.2" y2="334.2" stroke="#333" stroke-width="0.9"/><line x1="637.7" y1="334.2" x2="641.9000000000001" y2="334.2" stroke="#333" stroke-width="0.9"/><line x1="279.2" y1="341.3" x2="282.2" y2="341.3" stroke="#333" stroke-width="0.9"/><line x1="637.7" y1="341.3" x2="640.7" y2="341.3" stroke="#333" stroke-width="0.9"/><line x1="279.2" y1="348.4" x2="282.2" y2="348.4" stroke="#333" stroke-width="0.9"/><line x1="637.7" y1="348.4" x2="640.7" y2="348.4" stroke="#333" stroke-width="0.9"/><line x1="278.0" y1="355.5" x2="282.2" y2="355.5" stroke="#333" stroke-width="0.9"/><line x1="637.7" y1="355.5" x2="641.9000000000001" y2="355.5" stroke="#333" stroke-width="0.9"/><line x1="279.2" y1="362.6" x2="282.2" y2="362.6" stroke="#333" stroke-width="0.9"/><line x1="637.7" y1="362.6" x2="640.7" y2="362.6" stroke="#333" stroke-width="0.9"/><line x1="282.2" y1="220.6" x2="637.7" y2="220.6" stroke="#6e5538" stroke-width="1" stroke-dasharray="2.5 3.5"/><line x1="282.2" y1="362.6" x2="637.7" y2="362.6" stroke="#6e5538" stroke-width="1" stroke-dasharray="2.5 3.5"/><polygon points="304.3,291.3 305.2,287.1 306.1,283.5 307.0,282.7 307.9,280.8 308.8,284.6 309.7,285.0 310.6,284.6 311.5,284.7 312.4,283.7 313.3,285.4 314.2,284.5 315.1,284.1 316.0,284.3 316.9,286.2 317.8,286.0 318.7,285.9 319.7,284.1 320.6,285.8 321.5,286.2 322.4,284.7 323.3,286.6 324.2,287.1 325.1,286.2 326.0,287.7 326.9,287.6 327.8,287.6 328.7,287.5 329.6,288.1 330.5,288.4 331.4,289.6 332.3,289.9 333.2,290.4 334.1,290.8 335.0,291.3 335.0,291.3 334.1,291.6 333.2,291.8 332.3,292.1 331.4,292.5 330.5,292.6 329.6,293.1 328.7,293.3 327.8,293.6 326.9,293.5 326.0,293.9 325.1,293.9 324.2,295.2 323.3,295.0 322.4,296.3 321.5,296.2 320.6,297.5 319.7,296.6 318.7,296.9 317.8,297.3 316.9,298.2 316.0,298.0 315.1,299.1 314.2,298.0 313.3,297.6 312.4,299.8 311.5,298.9 310.6,299.5 309.7,297.9 308.8,297.2 307.9,299.2 307.0,298.2 306.1,297.5 305.2,294.3 304.3,291.3" fill="#636363"/><polygon points="304.3,291.3 305.2,290.2 306.1,289.3 307.0,288.8 307.9,288.9 308.8,289.0 309.7,289.4 310.6,289.0 311.5,289.0 312.4,288.7 313.3,289.2 314.2,288.7 315.1,289.4 316.0,288.6 316.9,288.7 317.8,288.6 318.7,289.3 319.7,288.9 320.6,289.3 321.5,289.3 322.4,289.2 323.3,288.8 324.2,289.4 325.1,289.3 326.0,289.4 326.9,288.9 327.8,289.5 328.7,289.5 329.6,289.6 330.5,289.4 331.4,289.6 332.3,289.4 333.2,289.9 334.1,290.4 335.0,291.3 335.0,291.3 334.1,292.1 333.2,292.8 332.3,293.0 331.4,293.4 330.5,292.9 329.6,293.6 328.7,293.1 327.8,293.1 326.9,293.4 326.0,293.5 325.1,293.1 324.2,293.3 323.3,293.6 322.4,293.9 321.5,293.4 320.6,293.7 319.7,293.6 318.7,293.2 317.8,293.8 316.9,293.4 316.0,293.5 315.1,293.3 314.2,293.4 313.3,293.2 312.4,293.7 311.5,293.3 310.6,293.6 309.7,293.4 308.8,293.1 307.9,293.5 307.0,293.1 306.1,293.3 305.2,292.4 304.3,291.3" fill="#56bbe8"/><polygon points="304.3,291.3 305.2,290.8 306.1,290.3 307.0,290.1 307.9,290.1 308.8,290.1 309.7,290.3 310.6,290.1 311.5,290.2 312.4,290.0 313.3,290.2 314.2,290.0 315.1,290.4 316.0,289.9 316.9,290.0 317.8,289.9 318.7,290.3 319.7,290.1 320.6,290.3 321.5,290.3 322.4,290.3 323.3,290.1 324.2,290.3 325.1,290.3 326.0,290.4 326.9,290.1 327.8,290.4 328.7,290.4 329.6,290.4 330.5,290.4 331.4,290.4 332.3,290.3 333.2,290.6 334.1,290.9 335.0,291.3 335.0,291.3 334.1,291.7 333.2,292.0 332.3,292.2 331.4,292.3 330.5,292.1 329.6,292.5 328.7,292.2 327.8,292.2 326.9,292.3 326.0,292.4 325.1,292.2 324.2,292.3 323.3,292.5 322.4,292.6 321.5,292.3 320.6,292.5 319.7,292.4 318.7,292.3 317.8,292.6 316.9,292.3 316.0,292.4 315.1,292.3 314.2,292.4 313.3,292.2 312.4,292.5 311.5,292.3 310.6,292.5 309.7,292.4 308.8,292.2 307.9,292.4 307.0,292.2 306.1,292.3 305.2,291.9 304.3,291.3" fill="#24658e" opacity="0.85"/><polygon points="341.9,291.3 342.8,286.6 343.7,285.3 344.6,287.4 345.6,287.0 346.5,286.8 347.4,286.0 348.3,282.6 349.2,282.2 350.1,280.6 351.0,280.2 352.0,282.7 352.9,280.7 353.8,282.2 354.7,283.9 355.6,281.9 356.5,283.6 357.4,284.2 358.4,284.0 359.3,285.2 360.2,283.8 361.1,285.5 362.0,283.8 362.9,284.3 363.9,283.6 364.8,282.6 365.7,282.9 366.6,284.4 367.5,284.0 368.4,285.4 369.3,285.5 370.3,286.3 371.2,287.3 372.1,286.6 373.0,285.8 373.9,284.9 374.8,286.7 375.7,286.5 376.7,285.8 377.6,286.5 378.5,287.6 379.4,287.4 380.3,287.3 381.2,288.3 382.1,288.7 383.1,289.7 384.0,290.1 384.9,290.6 385.8,291.3 385.8,291.3 384.9,291.9 384.0,292.6 383.1,293.2 382.1,293.2 381.2,294.5 380.3,294.6 379.4,295.5 378.5,295.8 377.6,295.8 376.7,295.3 375.7,295.6 374.8,295.5 373.9,295.0 373.0,296.2 372.1,295.6 371.2,296.1 370.3,295.9 369.3,297.1 368.4,296.0 367.5,296.2 366.6,298.3 365.7,296.7 364.8,297.7 363.9,297.8 362.9,297.2 362.0,298.9 361.1,297.8 360.2,297.5 359.3,297.7 358.4,299.1 357.4,297.4 356.5,297.1 355.6,298.6 354.7,299.0 353.8,299.6 352.9,298.4 352.0,299.1 351.0,298.4 350.1,299.5 349.2,298.8 348.3,298.3 347.4,297.4 346.5,297.2 345.6,297.1 344.6,294.7 343.7,294.2 342.8,292.5 341.9,291.3" fill="#636363"/><polygon points="341.9,291.3 342.8,289.8 343.7,288.9 344.6,289.0 345.6,288.6 346.5,287.8 347.4,286.6 348.3,286.1 349.2,285.6 350.1,285.5 351.0,285.8 352.0,284.7 352.9,285.3 353.8,286.7 354.7,285.9 355.6,285.7 356.5,286.4 357.4,285.3 358.4,286.5 359.3,285.6 360.2,286.1 361.1,285.7 362.0,286.8 362.9,287.0 363.9,286.8 364.8,287.3 365.7,286.3 366.6,287.8 367.5,287.1 368.4,287.9 369.3,288.3 370.3,289.0 371.2,288.7 372.1,288.6 373.0,288.7 373.9,288.1 374.8,288.5 375.7,288.3 376.7,288.7 377.6,288.8 378.5,288.6 379.4,289.2 380.3,289.5 381.2,289.3 382.1,289.1 383.1,289.7 384.0,289.9 384.9,290.6 385.8,291.3 385.8,291.3 384.9,291.8 384.0,292.6 383.1,292.9 382.1,293.0 381.2,292.9 380.3,293.2 379.4,293.7 378.5,293.8 377.6,293.6 376.7,293.2 375.7,293.8 374.8,293.9 373.9,293.8 373.0,293.7 372.1,293.4 371.2,293.0 370.3,293.0 369.3,293.8 368.4,293.8 367.5,294.0 366.6,294.3 365.7,295.1 364.8,294.3 363.9,295.5 362.9,294.9 362.0,294.5 361.1,295.5 360.2,294.7 359.3,295.6 358.4,295.3 357.4,295.4 356.5,295.5 355.6,295.9 354.7,294.9 353.8,295.7 352.9,295.5 352.0,296.1 351.0,295.5 350.1,295.4 349.2,295.7 348.3,295.6 347.4,295.3 346.5,295.0 345.6,294.2 344.6,294.1 343.7,293.5 342.8,293.1 341.9,291.3" fill="#56bbe8"/><polygon points="341.9,291.3 342.8,290.6 343.7,290.1 344.6,290.2 345.6,290.0 346.5,289.5 347.4,289.0 348.3,288.7 349.2,288.5 350.1,288.4 351.0,288.6 352.0,288.0 352.9,288.3 353.8,289.0 354.7,288.6 355.6,288.5 356.5,288.9 357.4,288.3 358.4,288.9 359.3,288.4 360.2,288.7 361.1,288.5 362.0,289.0 362.9,289.1 363.9,289.1 364.8,289.3 365.7,288.8 366.6,289.5 367.5,289.2 368.4,289.6 369.3,289.8 370.3,290.1 371.2,290.0 372.1,289.9 373.0,290.0 373.9,289.7 374.8,289.9 375.7,289.8 376.7,290.0 377.6,290.0 378.5,289.9 379.4,290.3 380.3,290.4 381.2,290.3 382.1,290.2 383.1,290.5 384.0,290.6 384.9,290.9 385.8,291.3 385.8,291.3 384.9,291.6 384.0,291.9 383.1,292.1 382.1,292.1 381.2,292.1 380.3,292.3 379.4,292.5 378.5,292.5 377.6,292.5 376.7,292.3 375.7,292.5 374.8,292.6 373.9,292.5 373.0,292.5 372.1,292.4 371.2,292.2 370.3,292.1 369.3,292.6 368.4,292.6 367.5,292.7 366.6,292.8 365.7,293.2 364.8,292.8 363.9,293.4 362.9,293.1 362.0,292.9 361.1,293.4 360.2,293.0 359.3,293.5 358.4,293.3 357.4,293.3 356.5,293.4 355.6,293.6 354.7,293.1 353.8,293.5 352.9,293.4 352.0,293.7 351.0,293.4 350.1,293.3 349.2,293.5 348.3,293.5 347.4,293.3 346.5,293.2 345.6,292.8 344.6,292.7 343.7,292.4 342.8,292.2 341.9,291.3" fill="#24658e" opacity="0.85"/><polygon points="394.0,291.3 394.9,290.3 395.8,289.3 396.7,287.8 397.6,286.4 398.6,285.4 399.5,283.3 400.4,281.6 401.3,284.4 402.2,283.6 403.1,282.5 404.0,284.7 404.9,283.6 405.8,283.7 406.8,281.7 407.7,281.0 408.6,279.8 409.5,278.1 410.4,277.3 411.3,280.2 412.2,279.8 413.1,276.7 414.0,278.5 414.9,276.8 415.9,277.4 416.8,279.5 417.7,278.3 418.6,280.7 419.5,278.0 420.4,280.4 421.3,280.3 422.2,279.7 423.1,279.7 424.1,280.8 425.0,280.2 425.9,280.7 426.8,282.6 427.7,281.4 428.6,282.5 429.5,283.2 430.4,285.8 431.3,285.9 432.3,285.8 433.2,286.7 434.1,288.2 435.0,290.1 435.9,291.3 435.9,291.3 435.0,292.3 434.1,292.9 433.2,294.5 432.3,295.4 431.3,297.1 430.4,297.0 429.5,296.7 428.6,298.4 427.7,297.5 426.8,298.8 425.9,297.8 425.0,298.7 424.1,296.6 423.1,297.5 422.2,298.6 421.3,297.6 420.4,298.4 419.5,296.8 418.6,297.0 417.7,297.8 416.8,296.7 415.9,298.4 414.9,298.8 414.0,298.2 413.1,297.6 412.2,298.3 411.3,299.0 410.4,297.3 409.5,297.0 408.6,297.6 407.7,296.6 406.8,297.1 405.8,297.2 404.9,297.3 404.0,296.3 403.1,296.4 402.2,297.2 401.3,297.9 400.4,299.7 399.5,296.9 398.6,297.6 397.6,295.0 396.7,294.3 395.8,293.8 394.9,292.4 394.0,291.3" fill="#636363"/><polygon points="394.0,291.3 394.9,290.6 395.8,289.8 396.7,289.4 397.6,288.3 398.6,288.1 399.5,287.5 400.4,287.3 401.3,285.6 402.2,286.4 403.1,285.4 404.0,285.9 404.9,287.2 405.8,287.1 406.8,286.4 407.7,286.2 408.6,284.0 409.5,283.6 410.4,284.3 411.3,282.4 412.2,284.0 413.1,282.0 414.0,284.2 414.9,280.8 415.9,282.1 416.8,283.6 417.7,282.3 418.6,281.8 419.5,284.5 420.4,283.9 421.3,283.4 422.2,284.8 423.1,285.0 424.1,283.3 425.0,284.3 425.9,283.6 426.8,284.4 427.7,284.3 428.6,284.8 429.5,286.0 430.4,285.9 431.3,286.7 432.3,287.8 433.2,288.5 434.1,289.5 435.0,290.6 435.9,291.3 435.9,291.3 435.0,291.9 434.1,292.9 433.2,293.7 432.3,294.0 431.3,294.7 430.4,295.8 429.5,295.9 428.6,295.8 427.7,296.6 426.8,296.4 425.9,296.5 425.0,295.8 424.1,296.5 423.1,295.3 422.2,295.8 421.3,295.1 420.4,295.9 419.5,296.7 418.6,296.8 417.7,295.3 416.8,295.1 415.9,296.2 414.9,295.3 414.0,295.4 413.1,295.3 412.2,295.2 411.3,295.3 410.4,296.7 409.5,296.4 408.6,295.9 407.7,295.8 406.8,295.3 405.8,294.8 404.9,295.5 404.0,294.8 403.1,294.3 402.2,295.2 401.3,295.6 400.4,295.0 399.5,294.9 398.6,295.0 397.6,294.7 396.7,293.8 395.8,293.0 394.9,292.3 394.0,291.3" fill="#56bbe8"/><polygon points="394.0,291.3 394.9,290.9 395.8,290.6 396.7,290.3 397.6,289.8 398.6,289.7 399.5,289.4 400.4,289.3 401.3,288.5 402.2,288.9 403.1,288.4 404.0,288.6 404.9,289.2 405.8,289.2 406.8,288.8 407.7,288.7 408.6,287.7 409.5,287.5 410.4,287.8 411.3,286.8 412.2,287.6 413.1,286.7 414.0,287.8 414.9,286.0 415.9,286.7 416.8,287.5 417.7,286.8 418.6,286.5 419.5,287.9 420.4,287.6 421.3,287.4 422.2,288.1 423.1,288.1 424.1,287.3 425.0,287.8 425.9,287.5 426.8,287.9 427.7,287.8 428.6,288.1 429.5,288.6 430.4,288.6 431.3,289.0 432.3,289.6 433.2,289.9 434.1,290.4 435.0,290.9 435.9,291.3 435.9,291.3 435.0,291.6 434.1,292.1 433.2,292.5 432.3,292.7 431.3,293.0 430.4,293.5 429.5,293.6 428.6,293.5 427.7,293.9 426.8,293.9 425.9,293.9 425.0,293.5 424.1,293.9 423.1,293.3 422.2,293.6 421.3,293.2 420.4,293.6 419.5,294.0 418.6,294.0 417.7,293.3 416.8,293.2 415.9,293.8 414.9,293.3 414.0,293.4 413.1,293.3 412.2,293.3 411.3,293.3 410.4,294.0 409.5,293.8 408.6,293.6 407.7,293.5 406.8,293.3 405.8,293.1 404.9,293.4 404.0,293.0 403.1,292.8 402.2,293.2 401.3,293.4 400.4,293.1 399.5,293.1 398.6,293.1 397.6,293.0 396.7,292.6 395.8,292.2 394.9,291.8 394.0,291.3" fill="#24658e" opacity="0.85"/><polygon points="436.0,291.3 437.0,290.6 438.0,290.1 439.0,289.8 440.0,288.9 441.0,289.7 442.0,290.5 443.0,291.3 443.0,291.3 442.0,292.1 441.0,292.9 440.0,293.2 439.0,293.0 438.0,292.6 437.0,291.9 436.0,291.3" fill="#636363"/><polygon points="436.0,291.3 437.0,290.8 438.0,290.5 439.0,290.1 440.0,289.1 441.0,290.1 442.0,290.7 443.0,291.3 443.0,291.3 442.0,292.0 441.0,292.4 440.0,293.1 439.0,292.7 438.0,292.4 437.0,291.7 436.0,291.3" fill="#56bbe8"/><polygon points="436.0,291.3 437.0,291.0 438.0,290.9 439.0,290.7 440.0,290.2 441.0,290.7 442.0,291.0 443.0,291.3 443.0,291.3 442.0,291.6 441.0,291.9 440.0,292.2 439.0,292.0 438.0,291.8 437.0,291.5 436.0,291.3" fill="#24658e" opacity="0.85"/><polygon points="442.7,291.3 443.6,289.9 444.5,289.2 445.4,286.8 446.3,286.2 447.2,286.2 448.2,286.8 449.1,286.1 450.0,285.6 450.9,285.0 451.8,287.0 452.7,286.8 453.6,286.2 454.5,286.5 455.4,286.6 456.3,284.8 457.2,285.8 458.2,284.7 459.1,283.4 460.0,282.8 460.9,283.6 461.8,282.6 462.7,282.3 463.6,284.4 464.5,283.1 465.4,282.5 466.3,284.7 467.3,284.2 468.2,284.1 469.1,282.6 470.0,283.0 470.9,283.3 471.8,285.2 472.7,286.1 473.6,285.2 474.5,285.7 475.4,286.8 476.3,286.8 477.3,288.2 478.2,288.5 479.1,288.2 480.0,288.7 480.9,288.7 481.8,289.3 481.8,293.3 480.9,293.6 480.0,294.0 479.1,293.8 478.2,294.5 477.3,294.1 476.3,294.3 475.4,295.3 474.5,295.1 473.6,295.8 472.7,296.1 471.8,296.0 470.9,297.4 470.0,296.4 469.1,297.8 468.2,296.0 467.3,296.1 466.3,296.4 465.4,296.0 464.5,296.8 463.6,297.6 462.7,297.7 461.8,297.9 460.9,296.3 460.0,297.1 459.1,297.4 458.2,296.6 457.2,296.9 456.3,295.7 455.4,295.5 454.5,297.1 453.6,296.4 452.7,295.6 451.8,296.6 450.9,296.7 450.0,295.8 449.1,296.2 448.2,295.1 447.2,295.3 446.3,295.9 445.4,294.8 444.5,294.2 443.6,292.4 442.7,291.3" fill="#636363"/><polygon points="442.7,291.3 443.6,290.1 444.5,289.3 445.4,288.2 446.3,286.9 447.2,287.4 448.2,287.6 449.1,287.7 450.0,287.2 450.9,287.3 451.8,287.2 452.7,287.2 453.6,286.9 454.5,286.5 455.4,287.3 456.3,286.7 457.2,286.5 458.2,286.8 459.1,286.8 460.0,285.0 460.9,284.5 461.8,285.3 462.7,285.1 463.6,286.0 464.5,284.7 465.4,285.9 466.3,284.8 467.3,285.7 468.2,285.1 469.1,284.8 470.0,286.1 470.9,286.5 471.8,286.5 472.7,286.1 473.6,287.4 474.5,287.9 475.4,286.7 476.3,287.7 477.3,287.8 478.2,288.8 479.1,289.1 480.0,289.3 480.9,289.6 481.8,289.7 481.8,292.6 480.9,293.0 480.0,293.1 479.1,293.8 478.2,294.1 477.3,294.6 476.3,294.8 475.4,294.9 474.5,294.9 473.6,295.5 472.7,295.4 471.8,295.3 470.9,295.5 470.0,295.7 469.1,295.8 468.2,296.0 467.3,296.3 466.3,296.3 465.4,296.2 464.5,295.6 463.6,295.2 462.7,295.7 461.8,296.0 460.9,295.7 460.0,295.4 459.1,295.2 458.2,295.5 457.2,295.8 456.3,294.8 455.4,295.3 454.5,295.9 453.6,294.7 452.7,295.2 451.8,295.2 450.9,294.6 450.0,295.0 449.1,294.7 448.2,294.5 447.2,294.9 446.3,295.4 445.4,294.9 444.5,293.3 443.6,292.5 442.7,291.3" fill="#56bbe8"/><polygon points="442.7,291.3 443.6,290.7 444.5,290.3 445.4,289.8 446.3,289.1 447.2,289.4 448.2,289.4 449.1,289.5 450.0,289.3 450.9,289.3 451.8,289.3 452.7,289.3 453.6,289.1 454.5,288.9 455.4,289.3 456.3,289.0 457.2,288.9 458.2,289.0 459.1,289.0 460.0,288.1 460.9,287.9 461.8,288.3 462.7,288.2 463.6,288.7 464.5,288.0 465.4,288.6 466.3,288.1 467.3,288.5 468.2,288.2 469.1,288.0 470.0,288.7 470.9,288.9 471.8,288.9 472.7,288.7 473.6,289.4 474.5,289.6 475.4,289.0 476.3,289.5 477.3,289.6 478.2,290.1 479.1,290.2 480.0,290.3 480.9,290.4 481.8,290.5 481.8,292.0 480.9,292.2 480.0,292.2 479.1,292.5 478.2,292.7 477.3,292.9 476.3,293.0 475.4,293.1 474.5,293.1 473.6,293.4 472.7,293.3 471.8,293.3 470.9,293.4 470.0,293.5 469.1,293.6 468.2,293.7 467.3,293.8 466.3,293.8 465.4,293.8 464.5,293.4 463.6,293.2 462.7,293.5 461.8,293.7 460.9,293.5 460.0,293.4 459.1,293.2 458.2,293.4 457.2,293.6 456.3,293.1 455.4,293.3 454.5,293.6 453.6,293.0 452.7,293.2 451.8,293.2 450.9,293.0 450.0,293.2 449.1,293.0 448.2,292.9 447.2,293.1 446.3,293.4 445.4,293.1 444.5,292.3 443.6,291.9 442.7,291.3" fill="#24658e" opacity="0.85"/><polygon points="481.7,289.7 482.6,289.4 483.6,289.3 484.5,289.1 485.4,288.8 486.3,288.7 487.3,288.8 488.2,288.8 489.1,288.8 490.1,288.5 491.0,288.5 491.9,288.3 492.8,288.4 493.8,288.2 494.7,288.8 495.6,288.4 496.6,288.3 497.5,289.0 498.4,289.7 499.3,289.9 500.3,290.7 501.2,291.3 501.2,291.3 500.3,291.6 499.3,291.9 498.4,292.0 497.5,292.5 496.6,292.6 495.6,293.0 494.7,293.6 493.8,293.9 492.8,294.2 491.9,294.1 491.0,293.8 490.1,294.3 489.1,293.7 488.2,294.0 487.3,294.2 486.3,294.6 485.4,293.6 484.5,293.3 483.6,293.4 482.6,293.2 481.7,292.8" fill="#636363"/><polygon points="481.7,289.7 482.6,289.4 483.6,289.3 484.5,289.1 485.4,289.4 486.3,289.4 487.3,288.6 488.2,288.7 489.1,289.1 490.1,288.6 491.0,288.9 491.9,288.2 492.8,288.2 493.8,288.7 494.7,288.5 495.6,289.1 496.6,289.4 497.5,289.1 498.4,289.9 499.3,290.2 500.3,290.9 501.2,291.3 501.2,291.3 500.3,291.6 499.3,291.9 498.4,291.9 497.5,292.3 496.6,292.5 495.6,293.0 494.7,292.9 493.8,293.0 492.8,293.3 491.9,293.6 491.0,293.8 490.1,293.4 489.1,293.4 488.2,294.0 487.3,293.3 486.3,293.4 485.4,293.4 484.5,293.7 483.6,293.0 482.6,293.0 481.7,292.8" fill="#56bbe8"/><polygon points="481.7,290.5 482.6,290.4 483.6,290.3 484.5,290.2 485.4,290.3 486.3,290.3 487.3,290.0 488.2,290.0 489.1,290.2 490.1,289.9 491.0,290.1 491.9,289.7 492.8,289.7 493.8,290.0 494.7,289.9 495.6,290.2 496.6,290.3 497.5,290.2 498.4,290.6 499.3,290.8 500.3,291.1 501.2,291.3 501.2,291.3 500.3,291.4 499.3,291.6 498.4,291.6 497.5,291.8 496.6,291.9 495.6,292.1 494.7,292.1 493.8,292.1 492.8,292.3 491.9,292.4 491.0,292.6 490.1,292.3 489.1,292.3 488.2,292.6 487.3,292.3 486.3,292.4 485.4,292.4 484.5,292.5 483.6,292.2 482.6,292.1 481.7,292.1" fill="#24658e" opacity="0.85"/><polygon points="503.2,291.3 504.1,289.0 505.0,286.0 505.9,284.9 506.9,284.9 507.8,284.6 508.7,284.3 509.6,285.6 510.5,284.3 511.4,285.0 512.3,286.5 513.2,284.3 514.2,284.5 515.1,285.0 516.0,283.7 516.9,284.5 517.8,285.3 518.7,285.2 519.6,286.8 520.5,285.5 521.5,286.1 522.4,286.9 523.3,286.1 524.2,287.8 525.1,287.9 526.0,286.9 526.9,287.0 527.8,288.7 528.8,288.9 529.7,289.7 530.6,290.5 531.5,291.3 531.5,291.3 530.6,291.6 529.7,291.8 528.8,292.3 527.8,292.6 526.9,292.8 526.0,293.1 525.1,293.3 524.2,293.5 523.3,294.2 522.4,293.7 521.5,294.9 520.5,294.7 519.6,294.5 518.7,295.1 517.8,295.3 516.9,294.4 516.0,295.1 515.1,294.6 514.2,294.7 513.2,294.5 512.3,295.2 511.4,294.4 510.5,295.3 509.6,295.2 508.7,296.0 507.8,295.5 506.9,295.6 505.9,294.7 505.0,294.7 504.1,293.2 503.2,291.3" fill="#636363"/><polygon points="503.2,290.3 504.1,288.0 505.0,286.2 505.9,285.5 506.9,286.3 507.8,286.0 508.7,285.5 509.6,285.6 510.5,287.0 511.4,286.3 512.3,285.8 513.2,285.8 514.2,285.2 515.1,284.8 516.0,285.3 516.9,286.9 517.8,287.2 518.7,287.5 519.6,287.2 520.5,287.2 521.5,287.6 522.4,287.8 523.3,287.6 524.2,288.2 525.1,288.2 526.0,288.7 526.9,288.7 527.8,288.6 528.8,289.8 529.7,290.4 530.6,290.8 531.5,291.3 531.5,291.3 530.6,291.6 529.7,291.7 528.8,292.1 527.8,292.2 526.9,292.4 526.0,292.8 525.1,293.0 524.2,293.2 523.3,293.4 522.4,293.7 521.5,293.6 520.5,294.1 519.6,293.6 518.7,293.8 517.8,294.0 516.9,293.6 516.0,293.9 515.1,293.9 514.2,294.1 513.2,293.8 512.3,293.4 511.4,293.8 510.5,294.0 509.6,295.0 508.7,295.0 507.8,294.7 506.9,295.1 505.9,294.0 505.0,294.0 504.1,293.2 503.2,292.1" fill="#56bbe8"/><polygon points="503.2,290.8 504.1,289.7 505.0,288.7 505.9,288.4 506.9,288.8 507.8,288.6 508.7,288.4 509.6,288.5 510.5,289.1 511.4,288.8 512.3,288.6 513.2,288.5 514.2,288.2 515.1,288.0 516.0,288.3 516.9,289.1 517.8,289.2 518.7,289.4 519.6,289.3 520.5,289.3 521.5,289.5 522.4,289.6 523.3,289.5 524.2,289.8 525.1,289.7 526.0,290.0 526.9,290.0 527.8,290.0 528.8,290.6 529.7,290.8 530.6,291.0 531.5,291.3 531.5,291.3 530.6,291.4 529.7,291.5 528.8,291.7 527.8,291.7 526.9,291.9 526.0,292.0 525.1,292.2 524.2,292.2 523.3,292.3 522.4,292.5 521.5,292.4 520.5,292.7 519.6,292.5 518.7,292.5 517.8,292.6 516.9,292.5 516.0,292.6 515.1,292.6 514.2,292.7 513.2,292.6 512.3,292.4 511.4,292.5 510.5,292.7 509.6,293.2 508.7,293.2 507.8,293.0 506.9,293.2 505.9,292.7 505.0,292.6 504.1,292.3 503.2,291.7" fill="#24658e" opacity="0.85"/><line x1="282.2" y1="291.3" x2="637.7" y2="291.3" stroke="#4c9ec8" stroke-width="1.3"/><line x1="282.2" y1="291.3" x2="637.7" y2="291.3" stroke="#c98b3e" stroke-width="1.3" stroke-dasharray="3.3 3.3"/><polyline points="282.2,291.30 285.2,288.87 288.1,286.63 291.1,284.54 294.1,282.60 297.0,280.78 300.0,279.07 302.9,277.45 305.9,275.92 308.9,274.46 311.8,273.08 314.8,271.76 317.8,270.49 320.7,269.28 323.7,268.12 326.6,267.00 329.6,265.92 332.6,264.88 335.5,263.88 338.5,262.91 341.4,261.98 344.4,261.07 347.4,260.19 350.3,259.33 353.3,258.50 356.3,257.70 359.2,256.91 362.2,256.15 365.1,255.40 368.1,254.68 371.1,253.97 374.0,253.28 377.0,252.60 380.0,251.94 382.9,251.30 385.9,250.66 388.8,250.05 391.8,249.44 394.8,248.85 397.7,248.27 400.7,247.70 403.7,247.14 406.6,246.59 409.6,246.06 412.5,245.53 415.5,245.01 418.5,244.50 421.4,244.00 424.4,243.51 427.4,243.02 430.3,242.55 433.3,242.08 436.2,241.62 439.2,241.17 442.2,240.72 445.1,240.28 448.1,239.85 451.1,239.42 454.0,239.00 457.0,238.58 459.9,238.18 462.9,237.77 465.9,237.38 468.8,236.98 471.8,236.60 474.8,236.21 477.7,235.84 480.7,235.47 483.6,235.10 486.6,234.74 489.6,234.38 492.5,234.02 495.5,233.67 498.5,233.33 501.4,232.99 504.4,232.65 507.3,232.32 510.3,231.99 513.3,231.66 516.2,231.34 519.2,231.02 522.2,230.70 525.1,230.39 528.1,230.08 531.0,229.78 534.0,229.48 537.0,229.18 539.9,228.88 542.9,228.59 545.9,228.30 548.8,228.01 551.8,227.73 554.8,227.45 557.7,227.17 560.7,226.89 563.6,226.62 566.6,226.35 569.6,226.08 572.5,225.81 575.5,225.55 578.5,225.29 581.4,225.03 584.4,224.77 587.3,224.52 590.3,224.26 593.3,224.01 596.2,223.77 599.2,223.52 602.1,223.28 605.1,223.03 608.1,222.79 611.0,222.56 614.0,222.32 617.0,222.09 619.9,221.85 622.9,221.62 625.8,221.40 628.8,221.17 631.8,220.94 634.7,220.72 637.7,220.50" fill="none" stroke="#3c98cc" stroke-width="1.35"/><polyline points="282.2,291.30 285.2,293.73 288.1,295.97 291.1,298.06 294.1,300.00 297.0,301.82 300.0,303.53 302.9,305.15 305.9,306.68 308.9,308.14 311.8,309.52 314.8,310.84 317.8,312.11 320.7,313.32 323.7,314.48 326.6,315.60 329.6,316.68 332.6,317.72 335.5,318.72 338.5,319.69 341.4,320.62 344.4,321.53 347.4,322.41 350.3,323.27 353.3,324.10 356.3,324.90 359.2,325.69 362.2,326.45 365.1,327.20 368.1,327.92 371.1,328.63 374.0,329.32 377.0,330.00 380.0,330.66 382.9,331.30 385.9,331.94 388.8,332.55 391.8,333.16 394.8,333.75 397.7,334.33 400.7,334.90 403.7,335.46 406.6,336.01 409.6,336.54 412.5,337.07 415.5,337.59 418.5,338.10 421.4,338.60 424.4,339.09 427.4,339.58 430.3,340.05 433.3,340.52 436.2,340.98 439.2,341.43 442.2,341.88 445.1,342.32 448.1,342.75 451.1,343.18 454.0,343.60 457.0,344.02 459.9,344.42 462.9,344.83 465.9,345.22 468.8,345.62 471.8,346.00 474.8,346.39 477.7,346.76 480.7,347.13 483.6,347.50 486.6,347.86 489.6,348.22 492.5,348.58 495.5,348.93 498.5,349.27 501.4,349.61 504.4,349.95 507.3,350.28 510.3,350.61 513.3,350.94 516.2,351.26 519.2,351.58 522.2,351.90 525.1,352.21 528.1,352.52 531.0,352.82 534.0,353.12 537.0,353.42 539.9,353.72 542.9,354.01 545.9,354.30 548.8,354.59 551.8,354.87 554.8,355.15 557.7,355.43 560.7,355.71 563.6,355.98 566.6,356.25 569.6,356.52 572.5,356.79 575.5,357.05 578.5,357.31 581.4,357.57 584.4,357.83 587.3,358.08 590.3,358.34 593.3,358.59 596.2,358.83 599.2,359.08 602.1,359.32 605.1,359.57 608.1,359.81 611.0,360.04 614.0,360.28 617.0,360.51 619.9,360.75 622.9,360.98 625.8,361.20 628.8,361.43 631.8,361.66 634.7,361.88 637.7,362.10" fill="none" stroke="#3c98cc" stroke-width="1.35"/><circle cx="282.6" cy="291.3" r="1.6" fill="#fff"/><circle cx="637.3" cy="220.5" r="1.3" fill="#fff"/><circle cx="637.3" cy="362.1" r="1.3" fill="#fff"/></svg><div class="t" style="left:253.10px;width:30px;text-align:center;top:224.66px;font-size:8.18px;color:#2e3440;transform:scaleX(0.8929);transform-origin:center center;">90</div><div class="t" style="left:636.80px;width:30px;text-align:center;top:224.66px;font-size:8.18px;color:#2e3440;transform:scaleX(0.8929);transform-origin:center center;">90</div><div class="t" style="left:253.10px;width:30px;text-align:center;top:245.66px;font-size:8.18px;color:#2e3440;transform:scaleX(0.8929);transform-origin:center center;">60</div><div class="t" style="left:636.80px;width:30px;text-align:center;top:245.66px;font-size:8.18px;color:#2e3440;transform:scaleX(0.8929);transform-origin:center center;">60</div><div class="t" style="left:253.10px;width:30px;text-align:center;top:266.66px;font-size:8.18px;color:#2e3440;transform:scaleX(0.8929);transform-origin:center center;">30</div><div class="t" style="left:636.80px;width:30px;text-align:center;top:266.66px;font-size:8.18px;color:#2e3440;transform:scaleX(0.8929);transform-origin:center center;">30</div><div class="t" style="left:253.10px;width:30px;text-align:center;top:287.66px;font-size:8.18px;color:#2e3440;transform:scaleX(0.8929);transform-origin:center center;">0</div><div class="t" style="left:636.80px;width:30px;text-align:center;top:287.66px;font-size:8.18px;color:#2e3440;transform:scaleX(0.8929);transform-origin:center center;">0</div><div class="t" style="left:253.10px;width:30px;text-align:center;top:308.66px;font-size:8.18px;color:#2e3440;transform:scaleX(0.8929);transform-origin:center center;">30</div><div class="t" style="left:636.80px;width:30px;text-align:center;top:308.66px;font-size:8.18px;color:#2e3440;transform:scaleX(0.8929);transform-origin:center center;">30</div><div class="t" style="left:253.10px;width:30px;text-align:center;top:329.66px;font-size:8.18px;color:#2e3440;transform:scaleX(0.8929);transform-origin:center center;">60</div><div class="t" style="left:636.80px;width:30px;text-align:center;top:329.66px;font-size:8.18px;color:#2e3440;transform:scaleX(0.8929);transform-origin:center center;">60</div><div class="t" style="left:253.10px;width:30px;text-align:center;top:350.66px;font-size:8.18px;color:#2e3440;transform:scaleX(0.8929);transform-origin:center center;">90</div><div class="t" style="left:636.80px;width:30px;text-align:center;top:350.66px;font-size:8.18px;color:#2e3440;transform:scaleX(0.8929);transform-origin:center center;">90</div><div class="a" style="left:359px;top:371px;width:59.7px;height:14.6px;background:#fff;border:1px solid #dde2ea"></div><div class="t" style="left:308.85px;width:160px;text-align:center;top:376.36px;font-size:8.18px;color:#222;transform:scaleX(0.8929);transform-origin:center center;">Fade In</div><div class="a" style="left:500.4px;top:371px;width:59.6px;height:14.6px;background:#e6eaf2;border:1px solid #d3d9e3"></div><div class="t" style="left:450.20px;width:160px;text-align:center;top:376.36px;font-size:8.18px;color:#222;transform:scaleX(0.8929);transform-origin:center center;">Fade Out</div><div class="a" style="left:252.2px;top:403.2px;width:53.30000000000001px;height:16.5px;background:#dae1ee;border:1px solid #c4cedd"></div><div class="t" style="left:198.85px;width:160px;text-align:center;top:407.76px;font-size:8.18px;color:#222;transform:scaleX(0.8929);transform-origin:center center;">To <u>F</u>avorites</div><div class="a" style="left:310.4px;top:403.2px;width:53.200000000000045px;height:16.5px;background:#dae1ee;border:1px solid #c4cedd"></div><div class="t" style="left:257.00px;width:160px;text-align:center;top:407.76px;font-size:8.18px;color:#222;transform:scaleX(0.8929);transform-origin:center center;"><u>H</u>elp</div><div class="a" style="left:493.5px;top:403.2px;width:53.299999999999955px;height:16.5px;background:#dae1ee;border:1px solid #c4cedd"></div><div class="t" style="left:440.15px;width:160px;text-align:center;top:407.76px;font-size:8.18px;color:#222;transform:scaleX(0.8929);transform-origin:center center;">Preview</div><div class="a" style="left:551.6px;top:403.2px;width:53.39999999999998px;height:16.5px;background:#dae1ee;border:1px solid #c4cedd"></div><div class="t" style="left:498.30px;width:160px;text-align:center;top:407.76px;font-size:8.18px;color:#222;transform:scaleX(0.8929);transform-origin:center center;"><u>C</u>ancel</div><div class="a" style="left:609.7px;top:403.2px;width:53.09999999999991px;height:16.5px;background:#dae1ee;border:1px solid #c4cedd"></div><div class="t" style="left:556.25px;width:160px;text-align:center;top:407.76px;font-size:8.18px;color:#222;transform:scaleX(0.8929);transform-origin:center center;"><u>O</u>K</div><div class="a" style="left:423px;top:371px;width:73px;height:14.4px;background:#fff;border:1px solid #3d7bd8"></div><div class="t" style="left:426.4px;top:374.46px;font-size:8.18px;color:#111;transform:scaleX(0.8929);transform-origin:left center;">fast</div><svg class="a" style="left:486px;top:376px" width="8" height="5"><path d="M0.8 0.8 h5.6 l-2.8 3 z" fill="#111"/></svg><div class="a" style="left:423px;top:385.2px;width:73.7px;height:67px;background:#fff;border:1px solid #b9c2ce;box-shadow:1px 1px 1px rgba(0,0,0,0.15)"></div><div class="a" style="left:424px;top:435px;width:71.7px;height:16.2px;background:#dce3f0"></div><div class="t" style="left:426.6px;top:391.66px;font-size:8.18px;color:#222;transform:scaleX(0.8929);transform-origin:left center;">linear</div><div class="t" style="left:426.6px;top:407.96px;font-size:8.18px;color:#222;transform:scaleX(0.8929);transform-origin:left center;">fast</div><div class="t" style="left:426.6px;top:424.16px;font-size:8.18px;color:#222;transform:scaleX(0.8929);transform-origin:left center;">slow</div><div class="t" style="left:426.6px;top:440.46px;font-size:8.18px;color:#222;transform:scaleX(0.8929);transform-origin:left center;">smooth</div><svg class="a" style="left:657px;top:120px" width="12" height="12"><path d="M2 1.8 L10.2 10.2 M10.2 1.8 L2 10.2" stroke="#222" stroke-width="1.2"/></svg>
</body></html>
